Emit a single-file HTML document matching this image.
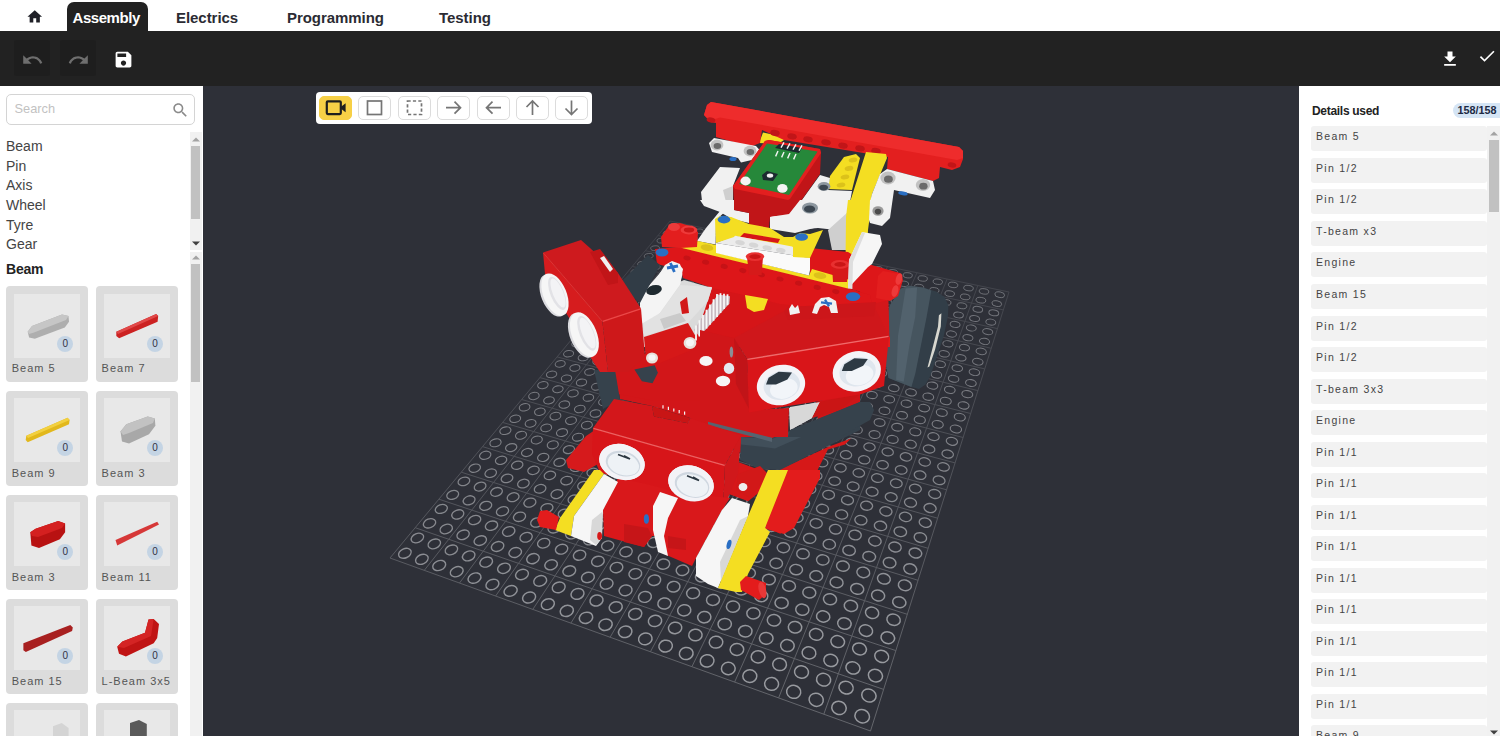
<!DOCTYPE html>
<html lang="en"><head><meta charset="utf-8"><title>Assembly</title>
<style>
*{box-sizing:border-box;margin:0;padding:0}
html,body{width:1500px;height:736px;overflow:hidden;background:#2e3038;font-family:"Liberation Sans",sans-serif;color:#333}
#nav{position:absolute;left:0;top:0;width:1500px;height:31px;background:#fff}
#nav .tab{position:absolute;top:2px;height:29px;font-weight:bold;font-size:15px;line-height:32.400px;color:#2b2b33;white-space:nowrap;letter-spacing:-0.05px}
#nav .tab.act{left:67px;width:81px;background:#222;color:#fff;border-radius:7px 7px 0 0;text-align:left;padding-left:5.500px;letter-spacing:-0.450px}
#bar{position:absolute;left:0;top:31px;width:1500px;height:55px;background:#222}
.tb{position:absolute;top:9px;width:36px;height:36px;background:#1e1e1e;border-radius:3px}
#left{position:absolute;left:0;top:86px;width:203px;height:650px;background:#fff;overflow:hidden}
#search{position:absolute;left:5.5px;top:8px;width:189px;height:30.5px;border:1px solid #d4d4d4;border-radius:5px;background:#fff;font-size:12.8px;color:#c2c2c2;line-height:27px;padding-left:8px}
.cat{position:absolute;left:6px;font-size:14px;color:#444;line-height:16px;white-space:nowrap}
.sbt{position:absolute;background:#f1f1f1}
.sbh{position:absolute;background:#c1c1c1}
.card{position:absolute;width:82px;height:95.600px;background:#dcdcdc;border-radius:4px}
.card i{position:absolute;left:8px;top:7.5px;width:66px;height:64px;background:#e8e8e8;display:block}
.card b{position:absolute;left:51.5px;top:49.5px;width:16px;height:16px;border-radius:8px;background:#c4d4e4;font-weight:normal;font-size:10px;line-height:16px;text-align:center;color:#334}
.card span{position:absolute;left:6px;top:75px;font-size:11px;letter-spacing:1px;color:#555;white-space:nowrap;line-height:14px}
.card svg{position:absolute;left:8px;top:7.5px}
#right{position:absolute;left:1299px;top:86px;width:201px;height:650px;background:#fff;overflow:hidden}
.it{position:absolute;left:12px;width:175.5px;height:25px;background:#f2f2f2;border-radius:3px;font-size:10.5px;letter-spacing:1.3px;color:#444;line-height:20px;padding-left:5px;white-space:nowrap}
#scene{position:absolute;left:202px;top:86px}
#vt{position:absolute;left:315.5px;top:92px;width:276.5px;height:32px;background:#fff;border-radius:4px}
.vb{position:absolute;top:3.5px;width:33px;height:24.5px;border:1px solid #dcdcdc;border-radius:5px;background:#fff}
.vb.on{background:#f7d046;border-color:#f7d046}
</style></head><body>
<svg id="scene" width="1097" height="650" viewBox="0 0 1097 650">
<rect width="1097" height="650" fill="#2e3038"/>
<defs><linearGradient id="gl" gradientUnits="userSpaceOnUse" x1="0" y1="134" x2="0" y2="614"><stop offset="0" stop-color="#3d3f47"/><stop offset="1" stop-color="#63656b"/></linearGradient></defs>
<path d="M188.0 472.0L468.0 135.0M222.3 484.3L493.5 140.3M257.5 497.0L519.5 145.8M293.6 510.0L545.9 151.3M330.8 523.4L572.8 157.0M368.9 537.1L600.3 162.7M408.1 551.3L628.2 168.5M448.4 565.8L656.6 174.5M489.9 580.7L685.5 180.6M532.6 596.1L715.0 186.7M576.6 611.9L745.1 193.0M621.8 628.2L775.8 199.5M668.5 645.0L807.0 206.0M188.0 472.0L668.5 645.0M213.2 441.7L681.6 603.4M236.9 413.2L693.9 564.6M259.3 386.2L705.3 528.3M280.5 360.6L716.1 494.3M300.6 336.4L726.1 462.3M319.7 313.5L735.6 432.2M337.9 291.6L744.6 403.8M355.1 270.9L753.1 376.9M371.6 251.1L761.1 351.5M387.3 232.2L768.7 327.5M402.2 214.2L775.9 304.6M416.5 196.9L782.7 282.9M430.2 180.4L789.2 262.3M443.4 164.7L795.4 242.6M455.9 149.5L801.4 223.9M468.0 135.0L807.0 206.0" stroke="url(#gl)" stroke-width="1" fill="none"/>
<g fill="none" stroke="#989a9f"><ellipse cx="202.9" cy="467.3" rx="6.6" ry="4.6" transform="rotate(156 202.9 467.3)" stroke-width="1.38" opacity="0.88"/><ellipse cx="215.4" cy="452.0" rx="6.5" ry="4.5" transform="rotate(158 215.4 452.0)" stroke-width="1.35" opacity="0.86"/><ellipse cx="227.5" cy="437.3" rx="6.4" ry="4.4" transform="rotate(159 227.5 437.3)" stroke-width="1.32" opacity="0.84"/><ellipse cx="239.3" cy="422.9" rx="6.2" ry="4.3" transform="rotate(160 239.3 422.9)" stroke-width="1.29" opacity="0.83"/><ellipse cx="250.7" cy="408.9" rx="6.1" ry="4.2" transform="rotate(161 250.7 408.9)" stroke-width="1.26" opacity="0.81"/><ellipse cx="261.9" cy="395.4" rx="6.0" ry="4.1" transform="rotate(162 261.9 395.4)" stroke-width="1.24" opacity="0.80"/><ellipse cx="272.7" cy="382.2" rx="5.9" ry="4.0" transform="rotate(163 272.7 382.2)" stroke-width="1.21" opacity="0.79"/><ellipse cx="283.2" cy="369.3" rx="5.8" ry="3.9" transform="rotate(164 283.2 369.3)" stroke-width="1.19" opacity="0.77"/><ellipse cx="293.5" cy="356.8" rx="5.7" ry="3.8" transform="rotate(165 293.5 356.8)" stroke-width="1.16" opacity="0.76"/><ellipse cx="303.4" cy="344.7" rx="5.6" ry="3.7" transform="rotate(166 303.4 344.7)" stroke-width="1.14" opacity="0.75"/><ellipse cx="313.2" cy="332.8" rx="5.5" ry="3.6" transform="rotate(167 313.2 332.8)" stroke-width="1.12" opacity="0.74"/><ellipse cx="322.6" cy="321.3" rx="5.4" ry="3.6" transform="rotate(167 322.6 321.3)" stroke-width="1.10" opacity="0.73"/><ellipse cx="331.9" cy="310.0" rx="5.3" ry="3.5" transform="rotate(168 331.9 310.0)" stroke-width="1.08" opacity="0.71"/><ellipse cx="340.9" cy="299.1" rx="5.3" ry="3.4" transform="rotate(169 340.9 299.1)" stroke-width="1.06" opacity="0.70"/><ellipse cx="349.6" cy="288.4" rx="5.2" ry="3.3" transform="rotate(170 349.6 288.4)" stroke-width="1.04" opacity="0.69"/><ellipse cx="358.2" cy="277.9" rx="5.1" ry="3.2" transform="rotate(170 358.2 277.9)" stroke-width="1.02" opacity="0.68"/><ellipse cx="366.6" cy="267.7" rx="5.1" ry="3.2" transform="rotate(171 366.6 267.7)" stroke-width="1.00" opacity="0.67"/><ellipse cx="374.7" cy="257.8" rx="5.0" ry="3.1" transform="rotate(171 374.7 257.8)" stroke-width="0.98" opacity="0.66"/><ellipse cx="382.7" cy="248.1" rx="4.9" ry="3.0" transform="rotate(172 382.7 248.1)" stroke-width="0.97" opacity="0.65"/><ellipse cx="390.5" cy="238.6" rx="4.9" ry="3.0" transform="rotate(172 390.5 238.6)" stroke-width="0.95" opacity="0.65"/><ellipse cx="398.0" cy="229.3" rx="4.8" ry="2.9" transform="rotate(173 398.0 229.3)" stroke-width="0.93" opacity="0.64"/><ellipse cx="405.5" cy="220.3" rx="4.7" ry="2.8" transform="rotate(173 405.5 220.3)" stroke-width="0.92" opacity="0.63"/><ellipse cx="412.7" cy="211.4" rx="4.7" ry="2.8" transform="rotate(174 412.7 211.4)" stroke-width="0.90" opacity="0.62"/><ellipse cx="419.8" cy="202.8" rx="4.6" ry="2.7" transform="rotate(174 419.8 202.8)" stroke-width="0.89" opacity="0.61"/><ellipse cx="426.8" cy="194.3" rx="4.6" ry="2.7" transform="rotate(174 426.8 194.3)" stroke-width="0.87" opacity="0.60"/><ellipse cx="433.6" cy="186.0" rx="4.5" ry="2.6" transform="rotate(175 433.6 186.0)" stroke-width="0.86" opacity="0.60"/><ellipse cx="440.2" cy="177.9" rx="4.5" ry="2.5" transform="rotate(175 440.2 177.9)" stroke-width="0.84" opacity="0.59"/><ellipse cx="446.7" cy="170.0" rx="4.4" ry="2.5" transform="rotate(175 446.7 170.0)" stroke-width="0.83" opacity="0.58"/><ellipse cx="453.1" cy="162.2" rx="4.4" ry="2.4" transform="rotate(176 453.1 162.2)" stroke-width="0.82" opacity="0.58"/><ellipse cx="459.3" cy="154.6" rx="4.3" ry="2.4" transform="rotate(176 459.3 154.6)" stroke-width="0.80" opacity="0.57"/><ellipse cx="465.4" cy="147.2" rx="4.3" ry="2.3" transform="rotate(176 465.4 147.2)" stroke-width="0.79" opacity="0.56"/><ellipse cx="471.4" cy="139.9" rx="4.2" ry="2.3" transform="rotate(177 471.4 139.9)" stroke-width="0.78" opacity="0.56"/><ellipse cx="219.9" cy="473.3" rx="6.6" ry="4.7" transform="rotate(156 219.9 473.3)" stroke-width="1.39" opacity="0.88"/><ellipse cx="232.3" cy="457.9" rx="6.5" ry="4.6" transform="rotate(158 232.3 457.9)" stroke-width="1.36" opacity="0.87"/><ellipse cx="244.2" cy="443.0" rx="6.4" ry="4.5" transform="rotate(159 244.2 443.0)" stroke-width="1.33" opacity="0.85"/><ellipse cx="255.8" cy="428.4" rx="6.2" ry="4.4" transform="rotate(160 255.8 428.4)" stroke-width="1.30" opacity="0.84"/><ellipse cx="267.1" cy="414.3" rx="6.1" ry="4.3" transform="rotate(161 267.1 414.3)" stroke-width="1.28" opacity="0.82"/><ellipse cx="278.1" cy="400.6" rx="6.0" ry="4.2" transform="rotate(162 278.1 400.6)" stroke-width="1.25" opacity="0.81"/><ellipse cx="288.7" cy="387.2" rx="5.9" ry="4.1" transform="rotate(163 288.7 387.2)" stroke-width="1.22" opacity="0.79"/><ellipse cx="299.1" cy="374.3" rx="5.8" ry="4.0" transform="rotate(164 299.1 374.3)" stroke-width="1.20" opacity="0.78"/><ellipse cx="309.2" cy="361.6" rx="5.7" ry="3.9" transform="rotate(165 309.2 361.6)" stroke-width="1.17" opacity="0.77"/><ellipse cx="319.0" cy="349.3" rx="5.6" ry="3.8" transform="rotate(166 319.0 349.3)" stroke-width="1.15" opacity="0.75"/><ellipse cx="328.6" cy="337.4" rx="5.5" ry="3.7" transform="rotate(167 328.6 337.4)" stroke-width="1.13" opacity="0.74"/><ellipse cx="337.9" cy="325.7" rx="5.4" ry="3.6" transform="rotate(168 337.9 325.7)" stroke-width="1.11" opacity="0.73"/><ellipse cx="347.0" cy="314.3" rx="5.4" ry="3.5" transform="rotate(169 347.0 314.3)" stroke-width="1.09" opacity="0.72"/><ellipse cx="355.9" cy="303.2" rx="5.3" ry="3.4" transform="rotate(169 355.9 303.2)" stroke-width="1.07" opacity="0.71"/><ellipse cx="364.5" cy="292.4" rx="5.2" ry="3.4" transform="rotate(170 364.5 292.4)" stroke-width="1.05" opacity="0.70"/><ellipse cx="372.9" cy="281.9" rx="5.1" ry="3.3" transform="rotate(171 372.9 281.9)" stroke-width="1.03" opacity="0.69"/><ellipse cx="381.2" cy="271.6" rx="5.1" ry="3.2" transform="rotate(171 381.2 271.6)" stroke-width="1.01" opacity="0.68"/><ellipse cx="389.2" cy="261.6" rx="5.0" ry="3.1" transform="rotate(172 389.2 261.6)" stroke-width="0.99" opacity="0.67"/><ellipse cx="397.0" cy="251.7" rx="4.9" ry="3.1" transform="rotate(172 397.0 251.7)" stroke-width="0.97" opacity="0.66"/><ellipse cx="404.7" cy="242.2" rx="4.9" ry="3.0" transform="rotate(173 404.7 242.2)" stroke-width="0.96" opacity="0.65"/><ellipse cx="412.1" cy="232.8" rx="4.8" ry="2.9" transform="rotate(173 412.1 232.8)" stroke-width="0.94" opacity="0.64"/><ellipse cx="419.4" cy="223.7" rx="4.7" ry="2.9" transform="rotate(174 419.4 223.7)" stroke-width="0.92" opacity="0.63"/><ellipse cx="426.6" cy="214.8" rx="4.7" ry="2.8" transform="rotate(174 426.6 214.8)" stroke-width="0.91" opacity="0.62"/><ellipse cx="433.5" cy="206.0" rx="4.6" ry="2.7" transform="rotate(175 433.5 206.0)" stroke-width="0.89" opacity="0.62"/><ellipse cx="440.4" cy="197.5" rx="4.6" ry="2.7" transform="rotate(175 440.4 197.5)" stroke-width="0.88" opacity="0.61"/><ellipse cx="447.0" cy="189.1" rx="4.5" ry="2.6" transform="rotate(175 447.0 189.1)" stroke-width="0.86" opacity="0.60"/><ellipse cx="453.6" cy="181.0" rx="4.5" ry="2.6" transform="rotate(176 453.6 181.0)" stroke-width="0.85" opacity="0.59"/><ellipse cx="460.0" cy="173.0" rx="4.4" ry="2.5" transform="rotate(176 460.0 173.0)" stroke-width="0.84" opacity="0.59"/><ellipse cx="466.2" cy="165.1" rx="4.4" ry="2.5" transform="rotate(176 466.2 165.1)" stroke-width="0.82" opacity="0.58"/><ellipse cx="472.3" cy="157.5" rx="4.3" ry="2.4" transform="rotate(176 472.3 157.5)" stroke-width="0.81" opacity="0.57"/><ellipse cx="478.3" cy="150.0" rx="4.3" ry="2.4" transform="rotate(177 478.3 150.0)" stroke-width="0.80" opacity="0.56"/><ellipse cx="484.2" cy="142.6" rx="4.2" ry="2.3" transform="rotate(177 484.2 142.6)" stroke-width="0.78" opacity="0.56"/><ellipse cx="237.2" cy="479.5" rx="6.7" ry="4.8" transform="rotate(157 237.2 479.5)" stroke-width="1.41" opacity="0.89"/><ellipse cx="249.4" cy="463.9" rx="6.5" ry="4.6" transform="rotate(158 249.4 463.9)" stroke-width="1.38" opacity="0.87"/><ellipse cx="261.1" cy="448.8" rx="6.4" ry="4.5" transform="rotate(159 261.1 448.8)" stroke-width="1.35" opacity="0.86"/><ellipse cx="272.6" cy="434.0" rx="6.3" ry="4.4" transform="rotate(161 272.6 434.0)" stroke-width="1.32" opacity="0.84"/><ellipse cx="283.7" cy="419.8" rx="6.1" ry="4.3" transform="rotate(162 283.7 419.8)" stroke-width="1.29" opacity="0.83"/><ellipse cx="294.5" cy="405.9" rx="6.0" ry="4.2" transform="rotate(163 294.5 405.9)" stroke-width="1.26" opacity="0.81"/><ellipse cx="305.0" cy="392.4" rx="5.9" ry="4.1" transform="rotate(164 305.0 392.4)" stroke-width="1.23" opacity="0.80"/><ellipse cx="315.2" cy="379.2" rx="5.8" ry="4.0" transform="rotate(165 315.2 379.2)" stroke-width="1.21" opacity="0.79"/><ellipse cx="325.1" cy="366.5" rx="5.7" ry="3.9" transform="rotate(166 325.1 366.5)" stroke-width="1.19" opacity="0.77"/><ellipse cx="334.8" cy="354.0" rx="5.6" ry="3.8" transform="rotate(167 334.8 354.0)" stroke-width="1.16" opacity="0.76"/><ellipse cx="344.2" cy="341.9" rx="5.5" ry="3.7" transform="rotate(168 344.2 341.9)" stroke-width="1.14" opacity="0.75"/><ellipse cx="353.4" cy="330.1" rx="5.5" ry="3.7" transform="rotate(169 353.4 330.1)" stroke-width="1.12" opacity="0.74"/><ellipse cx="362.3" cy="318.6" rx="5.4" ry="3.6" transform="rotate(169 362.3 318.6)" stroke-width="1.10" opacity="0.72"/><ellipse cx="371.0" cy="307.4" rx="5.3" ry="3.5" transform="rotate(170 371.0 307.4)" stroke-width="1.07" opacity="0.71"/><ellipse cx="379.5" cy="296.5" rx="5.2" ry="3.4" transform="rotate(171 379.5 296.5)" stroke-width="1.05" opacity="0.70"/><ellipse cx="387.8" cy="285.9" rx="5.2" ry="3.3" transform="rotate(171 387.8 285.9)" stroke-width="1.03" opacity="0.69"/><ellipse cx="395.9" cy="275.5" rx="5.1" ry="3.2" transform="rotate(172 395.9 275.5)" stroke-width="1.02" opacity="0.68"/><ellipse cx="403.8" cy="265.4" rx="5.0" ry="3.2" transform="rotate(172 403.8 265.4)" stroke-width="1.00" opacity="0.67"/><ellipse cx="411.5" cy="255.5" rx="4.9" ry="3.1" transform="rotate(173 411.5 255.5)" stroke-width="0.98" opacity="0.66"/><ellipse cx="419.0" cy="245.8" rx="4.9" ry="3.0" transform="rotate(173 419.0 245.8)" stroke-width="0.96" opacity="0.65"/><ellipse cx="426.3" cy="236.3" rx="4.8" ry="3.0" transform="rotate(174 426.3 236.3)" stroke-width="0.95" opacity="0.64"/><ellipse cx="433.5" cy="227.1" rx="4.8" ry="2.9" transform="rotate(174 433.5 227.1)" stroke-width="0.93" opacity="0.64"/><ellipse cx="440.5" cy="218.1" rx="4.7" ry="2.8" transform="rotate(175 440.5 218.1)" stroke-width="0.91" opacity="0.63"/><ellipse cx="447.4" cy="209.3" rx="4.7" ry="2.8" transform="rotate(175 447.4 209.3)" stroke-width="0.90" opacity="0.62"/><ellipse cx="454.1" cy="200.7" rx="4.6" ry="2.7" transform="rotate(175 454.1 200.7)" stroke-width="0.88" opacity="0.61"/><ellipse cx="460.6" cy="192.3" rx="4.5" ry="2.7" transform="rotate(176 460.6 192.3)" stroke-width="0.87" opacity="0.60"/><ellipse cx="467.1" cy="184.0" rx="4.5" ry="2.6" transform="rotate(176 467.1 184.0)" stroke-width="0.85" opacity="0.60"/><ellipse cx="473.3" cy="175.9" rx="4.4" ry="2.5" transform="rotate(176 473.3 175.9)" stroke-width="0.84" opacity="0.59"/><ellipse cx="479.5" cy="168.1" rx="4.4" ry="2.5" transform="rotate(177 479.5 168.1)" stroke-width="0.83" opacity="0.58"/><ellipse cx="485.5" cy="160.3" rx="4.3" ry="2.4" transform="rotate(177 485.5 160.3)" stroke-width="0.81" opacity="0.57"/><ellipse cx="491.4" cy="152.8" rx="4.3" ry="2.4" transform="rotate(177 491.4 152.8)" stroke-width="0.80" opacity="0.57"/><ellipse cx="497.1" cy="145.3" rx="4.3" ry="2.3" transform="rotate(177 497.1 145.3)" stroke-width="0.79" opacity="0.56"/><ellipse cx="254.7" cy="485.7" rx="6.7" ry="4.8" transform="rotate(157 254.7 485.7)" stroke-width="1.42" opacity="0.90"/><ellipse cx="266.7" cy="469.9" rx="6.5" ry="4.7" transform="rotate(158 266.7 469.9)" stroke-width="1.39" opacity="0.88"/><ellipse cx="278.3" cy="454.6" rx="6.4" ry="4.6" transform="rotate(160 278.3 454.6)" stroke-width="1.36" opacity="0.86"/><ellipse cx="289.5" cy="439.7" rx="6.3" ry="4.5" transform="rotate(161 289.5 439.7)" stroke-width="1.33" opacity="0.85"/><ellipse cx="300.5" cy="425.3" rx="6.2" ry="4.4" transform="rotate(162 300.5 425.3)" stroke-width="1.30" opacity="0.83"/><ellipse cx="311.1" cy="411.2" rx="6.0" ry="4.3" transform="rotate(163 311.1 411.2)" stroke-width="1.27" opacity="0.82"/><ellipse cx="321.4" cy="397.6" rx="5.9" ry="4.2" transform="rotate(164 321.4 397.6)" stroke-width="1.25" opacity="0.80"/><ellipse cx="331.5" cy="384.3" rx="5.8" ry="4.1" transform="rotate(166 331.5 384.3)" stroke-width="1.22" opacity="0.79"/><ellipse cx="341.2" cy="371.4" rx="5.7" ry="4.0" transform="rotate(167 341.2 371.4)" stroke-width="1.20" opacity="0.78"/><ellipse cx="350.8" cy="358.8" rx="5.6" ry="3.9" transform="rotate(167 350.8 358.8)" stroke-width="1.17" opacity="0.76"/><ellipse cx="360.0" cy="346.6" rx="5.6" ry="3.8" transform="rotate(168 360.0 346.6)" stroke-width="1.15" opacity="0.75"/><ellipse cx="369.0" cy="334.6" rx="5.5" ry="3.7" transform="rotate(169 369.0 334.6)" stroke-width="1.13" opacity="0.74"/><ellipse cx="377.8" cy="323.0" rx="5.4" ry="3.6" transform="rotate(170 377.8 323.0)" stroke-width="1.10" opacity="0.73"/><ellipse cx="386.4" cy="311.7" rx="5.3" ry="3.5" transform="rotate(171 386.4 311.7)" stroke-width="1.08" opacity="0.72"/><ellipse cx="394.7" cy="300.7" rx="5.2" ry="3.4" transform="rotate(171 394.7 300.7)" stroke-width="1.06" opacity="0.71"/><ellipse cx="402.9" cy="289.9" rx="5.2" ry="3.4" transform="rotate(172 402.9 289.9)" stroke-width="1.04" opacity="0.70"/><ellipse cx="410.8" cy="279.4" rx="5.1" ry="3.3" transform="rotate(172 410.8 279.4)" stroke-width="1.02" opacity="0.69"/><ellipse cx="418.6" cy="269.2" rx="5.0" ry="3.2" transform="rotate(173 418.6 269.2)" stroke-width="1.01" opacity="0.68"/><ellipse cx="426.1" cy="259.2" rx="5.0" ry="3.1" transform="rotate(174 426.1 259.2)" stroke-width="0.99" opacity="0.67"/><ellipse cx="433.5" cy="249.4" rx="4.9" ry="3.1" transform="rotate(174 433.5 249.4)" stroke-width="0.97" opacity="0.66"/><ellipse cx="440.7" cy="239.9" rx="4.8" ry="3.0" transform="rotate(174 440.7 239.9)" stroke-width="0.95" opacity="0.65"/><ellipse cx="447.8" cy="230.6" rx="4.8" ry="2.9" transform="rotate(175 447.8 230.6)" stroke-width="0.94" opacity="0.64"/><ellipse cx="454.6" cy="221.5" rx="4.7" ry="2.9" transform="rotate(175 454.6 221.5)" stroke-width="0.92" opacity="0.63"/><ellipse cx="461.4" cy="212.6" rx="4.7" ry="2.8" transform="rotate(176 461.4 212.6)" stroke-width="0.91" opacity="0.62"/><ellipse cx="467.9" cy="203.9" rx="4.6" ry="2.7" transform="rotate(176 467.9 203.9)" stroke-width="0.89" opacity="0.61"/><ellipse cx="474.4" cy="195.4" rx="4.6" ry="2.7" transform="rotate(176 474.4 195.4)" stroke-width="0.88" opacity="0.61"/><ellipse cx="480.7" cy="187.1" rx="4.5" ry="2.6" transform="rotate(177 480.7 187.1)" stroke-width="0.86" opacity="0.60"/><ellipse cx="486.8" cy="179.0" rx="4.5" ry="2.6" transform="rotate(177 486.8 179.0)" stroke-width="0.85" opacity="0.59"/><ellipse cx="492.9" cy="171.0" rx="4.4" ry="2.5" transform="rotate(177 492.9 171.0)" stroke-width="0.83" opacity="0.58"/><ellipse cx="498.7" cy="163.2" rx="4.4" ry="2.5" transform="rotate(177 498.7 163.2)" stroke-width="0.82" opacity="0.58"/><ellipse cx="504.5" cy="155.6" rx="4.3" ry="2.4" transform="rotate(178 504.5 155.6)" stroke-width="0.81" opacity="0.57"/><ellipse cx="510.2" cy="148.1" rx="4.3" ry="2.4" transform="rotate(178 510.2 148.1)" stroke-width="0.79" opacity="0.56"/><ellipse cx="272.5" cy="492.1" rx="6.7" ry="4.9" transform="rotate(157 272.5 492.1)" stroke-width="1.43" opacity="0.91"/><ellipse cx="284.2" cy="476.1" rx="6.5" ry="4.8" transform="rotate(159 284.2 476.1)" stroke-width="1.40" opacity="0.89"/><ellipse cx="295.6" cy="460.5" rx="6.4" ry="4.7" transform="rotate(160 295.6 460.5)" stroke-width="1.37" opacity="0.87"/><ellipse cx="306.7" cy="445.5" rx="6.3" ry="4.6" transform="rotate(161 306.7 445.5)" stroke-width="1.34" opacity="0.86"/><ellipse cx="317.5" cy="430.8" rx="6.2" ry="4.5" transform="rotate(163 317.5 430.8)" stroke-width="1.31" opacity="0.84"/><ellipse cx="327.9" cy="416.6" rx="6.1" ry="4.4" transform="rotate(164 327.9 416.6)" stroke-width="1.28" opacity="0.82"/><ellipse cx="338.1" cy="402.8" rx="5.9" ry="4.2" transform="rotate(165 338.1 402.8)" stroke-width="1.26" opacity="0.81"/><ellipse cx="347.9" cy="389.4" rx="5.8" ry="4.1" transform="rotate(166 347.9 389.4)" stroke-width="1.23" opacity="0.80"/><ellipse cx="357.6" cy="376.3" rx="5.8" ry="4.0" transform="rotate(167 357.6 376.3)" stroke-width="1.21" opacity="0.78"/><ellipse cx="366.9" cy="363.6" rx="5.7" ry="3.9" transform="rotate(168 366.9 363.6)" stroke-width="1.18" opacity="0.77"/><ellipse cx="376.0" cy="351.2" rx="5.6" ry="3.8" transform="rotate(169 376.0 351.2)" stroke-width="1.16" opacity="0.76"/><ellipse cx="384.9" cy="339.2" rx="5.5" ry="3.8" transform="rotate(170 384.9 339.2)" stroke-width="1.14" opacity="0.75"/><ellipse cx="393.5" cy="327.5" rx="5.4" ry="3.7" transform="rotate(171 393.5 327.5)" stroke-width="1.11" opacity="0.73"/><ellipse cx="401.9" cy="316.0" rx="5.3" ry="3.6" transform="rotate(171 401.9 316.0)" stroke-width="1.09" opacity="0.72"/><ellipse cx="410.1" cy="304.9" rx="5.3" ry="3.5" transform="rotate(172 410.1 304.9)" stroke-width="1.07" opacity="0.71"/><ellipse cx="418.1" cy="294.0" rx="5.2" ry="3.4" transform="rotate(173 418.1 294.0)" stroke-width="1.05" opacity="0.70"/><ellipse cx="425.9" cy="283.4" rx="5.1" ry="3.3" transform="rotate(173 425.9 283.4)" stroke-width="1.03" opacity="0.69"/><ellipse cx="433.5" cy="273.1" rx="5.1" ry="3.3" transform="rotate(174 433.5 273.1)" stroke-width="1.01" opacity="0.68"/><ellipse cx="440.9" cy="263.0" rx="5.0" ry="3.2" transform="rotate(174 440.9 263.0)" stroke-width="1.00" opacity="0.67"/><ellipse cx="448.1" cy="253.1" rx="4.9" ry="3.1" transform="rotate(175 448.1 253.1)" stroke-width="0.98" opacity="0.66"/><ellipse cx="455.2" cy="243.5" rx="4.9" ry="3.0" transform="rotate(175 455.2 243.5)" stroke-width="0.96" opacity="0.65"/><ellipse cx="462.1" cy="234.1" rx="4.8" ry="3.0" transform="rotate(175 462.1 234.1)" stroke-width="0.94" opacity="0.64"/><ellipse cx="468.9" cy="224.9" rx="4.7" ry="2.9" transform="rotate(176 468.9 224.9)" stroke-width="0.93" opacity="0.63"/><ellipse cx="475.5" cy="215.9" rx="4.7" ry="2.8" transform="rotate(176 475.5 215.9)" stroke-width="0.91" opacity="0.63"/><ellipse cx="481.9" cy="207.2" rx="4.6" ry="2.8" transform="rotate(177 481.9 207.2)" stroke-width="0.90" opacity="0.62"/><ellipse cx="488.2" cy="198.6" rx="4.6" ry="2.7" transform="rotate(177 488.2 198.6)" stroke-width="0.88" opacity="0.61"/><ellipse cx="494.4" cy="190.2" rx="4.5" ry="2.7" transform="rotate(177 494.4 190.2)" stroke-width="0.87" opacity="0.60"/><ellipse cx="500.4" cy="182.0" rx="4.5" ry="2.6" transform="rotate(177 500.4 182.0)" stroke-width="0.85" opacity="0.59"/><ellipse cx="506.4" cy="174.0" rx="4.4" ry="2.5" transform="rotate(178 506.4 174.0)" stroke-width="0.84" opacity="0.59"/><ellipse cx="512.1" cy="166.1" rx="4.4" ry="2.5" transform="rotate(178 512.1 166.1)" stroke-width="0.83" opacity="0.58"/><ellipse cx="517.8" cy="158.4" rx="4.3" ry="2.4" transform="rotate(178 517.8 158.4)" stroke-width="0.81" opacity="0.57"/><ellipse cx="523.3" cy="150.9" rx="4.3" ry="2.4" transform="rotate(178 523.3 150.9)" stroke-width="0.80" opacity="0.57"/><ellipse cx="290.4" cy="498.5" rx="6.7" ry="5.0" transform="rotate(157 290.4 498.5)" stroke-width="1.45" opacity="0.91"/><ellipse cx="302.0" cy="482.3" rx="6.5" ry="4.9" transform="rotate(159 302.0 482.3)" stroke-width="1.42" opacity="0.90"/><ellipse cx="313.2" cy="466.5" rx="6.4" ry="4.8" transform="rotate(161 313.2 466.5)" stroke-width="1.38" opacity="0.88"/><ellipse cx="324.1" cy="451.3" rx="6.3" ry="4.7" transform="rotate(162 324.1 451.3)" stroke-width="1.35" opacity="0.86"/><ellipse cx="334.7" cy="436.5" rx="6.2" ry="4.5" transform="rotate(163 334.7 436.5)" stroke-width="1.32" opacity="0.85"/><ellipse cx="344.9" cy="422.1" rx="6.1" ry="4.4" transform="rotate(165 344.9 422.1)" stroke-width="1.30" opacity="0.83"/><ellipse cx="354.9" cy="408.1" rx="6.0" ry="4.3" transform="rotate(166 354.9 408.1)" stroke-width="1.27" opacity="0.82"/><ellipse cx="364.6" cy="394.6" rx="5.9" ry="4.2" transform="rotate(167 364.6 394.6)" stroke-width="1.24" opacity="0.80"/><ellipse cx="374.0" cy="381.3" rx="5.8" ry="4.1" transform="rotate(168 374.0 381.3)" stroke-width="1.22" opacity="0.79"/><ellipse cx="383.2" cy="368.5" rx="5.7" ry="4.0" transform="rotate(169 383.2 368.5)" stroke-width="1.19" opacity="0.78"/><ellipse cx="392.2" cy="356.0" rx="5.6" ry="3.9" transform="rotate(170 392.2 356.0)" stroke-width="1.17" opacity="0.76"/><ellipse cx="400.9" cy="343.8" rx="5.5" ry="3.8" transform="rotate(171 400.9 343.8)" stroke-width="1.15" opacity="0.75"/><ellipse cx="409.3" cy="331.9" rx="5.4" ry="3.7" transform="rotate(171 409.3 331.9)" stroke-width="1.12" opacity="0.74"/><ellipse cx="417.6" cy="320.4" rx="5.4" ry="3.6" transform="rotate(172 417.6 320.4)" stroke-width="1.10" opacity="0.73"/><ellipse cx="425.6" cy="309.1" rx="5.3" ry="3.5" transform="rotate(173 425.6 309.1)" stroke-width="1.08" opacity="0.72"/><ellipse cx="433.5" cy="298.1" rx="5.2" ry="3.5" transform="rotate(173 433.5 298.1)" stroke-width="1.06" opacity="0.71"/><ellipse cx="441.1" cy="287.4" rx="5.1" ry="3.4" transform="rotate(174 441.1 287.4)" stroke-width="1.04" opacity="0.69"/><ellipse cx="448.6" cy="277.0" rx="5.1" ry="3.3" transform="rotate(174 448.6 277.0)" stroke-width="1.02" opacity="0.68"/><ellipse cx="455.8" cy="266.8" rx="5.0" ry="3.2" transform="rotate(175 455.8 266.8)" stroke-width="1.00" opacity="0.67"/><ellipse cx="462.9" cy="256.8" rx="4.9" ry="3.1" transform="rotate(175 462.9 256.8)" stroke-width="0.98" opacity="0.67"/><ellipse cx="469.9" cy="247.1" rx="4.9" ry="3.1" transform="rotate(176 469.9 247.1)" stroke-width="0.97" opacity="0.66"/><ellipse cx="476.6" cy="237.6" rx="4.8" ry="3.0" transform="rotate(176 476.6 237.6)" stroke-width="0.95" opacity="0.65"/><ellipse cx="483.3" cy="228.4" rx="4.8" ry="2.9" transform="rotate(176 483.3 228.4)" stroke-width="0.93" opacity="0.64"/><ellipse cx="489.7" cy="219.3" rx="4.7" ry="2.9" transform="rotate(177 489.7 219.3)" stroke-width="0.92" opacity="0.63"/><ellipse cx="496.1" cy="210.5" rx="4.7" ry="2.8" transform="rotate(177 496.1 210.5)" stroke-width="0.90" opacity="0.62"/><ellipse cx="502.2" cy="201.8" rx="4.6" ry="2.7" transform="rotate(177 502.2 201.8)" stroke-width="0.89" opacity="0.61"/><ellipse cx="508.3" cy="193.3" rx="4.6" ry="2.7" transform="rotate(178 508.3 193.3)" stroke-width="0.87" opacity="0.61"/><ellipse cx="514.2" cy="185.1" rx="4.5" ry="2.6" transform="rotate(178 514.2 185.1)" stroke-width="0.86" opacity="0.60"/><ellipse cx="520.0" cy="177.0" rx="4.5" ry="2.6" transform="rotate(178 520.0 177.0)" stroke-width="0.85" opacity="0.59"/><ellipse cx="525.6" cy="169.0" rx="4.4" ry="2.5" transform="rotate(178 525.6 169.0)" stroke-width="0.83" opacity="0.58"/><ellipse cx="531.2" cy="161.3" rx="4.4" ry="2.5" transform="rotate(179 531.2 161.3)" stroke-width="0.82" opacity="0.58"/><ellipse cx="536.6" cy="153.7" rx="4.3" ry="2.4" transform="rotate(179 536.6 153.7)" stroke-width="0.81" opacity="0.57"/><ellipse cx="308.6" cy="504.9" rx="6.7" ry="5.1" transform="rotate(158 308.6 504.9)" stroke-width="1.46" opacity="0.92"/><ellipse cx="320.0" cy="488.5" rx="6.6" ry="5.0" transform="rotate(160 320.0 488.5)" stroke-width="1.43" opacity="0.90"/><ellipse cx="331.0" cy="472.6" rx="6.4" ry="4.9" transform="rotate(161 331.0 472.6)" stroke-width="1.40" opacity="0.89"/><ellipse cx="341.7" cy="457.2" rx="6.3" ry="4.7" transform="rotate(163 341.7 457.2)" stroke-width="1.37" opacity="0.87"/><ellipse cx="352.1" cy="442.2" rx="6.2" ry="4.6" transform="rotate(164 352.1 442.2)" stroke-width="1.34" opacity="0.85"/><ellipse cx="362.2" cy="427.7" rx="6.1" ry="4.5" transform="rotate(165 362.2 427.7)" stroke-width="1.31" opacity="0.84"/><ellipse cx="372.0" cy="413.5" rx="6.0" ry="4.4" transform="rotate(167 372.0 413.5)" stroke-width="1.28" opacity="0.82"/><ellipse cx="381.5" cy="399.8" rx="5.9" ry="4.3" transform="rotate(168 381.5 399.8)" stroke-width="1.25" opacity="0.81"/><ellipse cx="390.7" cy="386.4" rx="5.8" ry="4.2" transform="rotate(169 390.7 386.4)" stroke-width="1.23" opacity="0.79"/><ellipse cx="399.7" cy="373.4" rx="5.7" ry="4.1" transform="rotate(170 399.7 373.4)" stroke-width="1.20" opacity="0.78"/><ellipse cx="408.5" cy="360.8" rx="5.6" ry="4.0" transform="rotate(171 408.5 360.8)" stroke-width="1.18" opacity="0.77"/><ellipse cx="417.0" cy="348.5" rx="5.5" ry="3.9" transform="rotate(171 417.0 348.5)" stroke-width="1.15" opacity="0.76"/><ellipse cx="425.3" cy="336.5" rx="5.4" ry="3.8" transform="rotate(172 425.3 336.5)" stroke-width="1.13" opacity="0.74"/><ellipse cx="433.4" cy="324.8" rx="5.4" ry="3.7" transform="rotate(173 433.4 324.8)" stroke-width="1.11" opacity="0.73"/><ellipse cx="441.3" cy="313.4" rx="5.3" ry="3.6" transform="rotate(173 441.3 313.4)" stroke-width="1.09" opacity="0.72"/><ellipse cx="449.0" cy="302.3" rx="5.2" ry="3.5" transform="rotate(174 449.0 302.3)" stroke-width="1.07" opacity="0.71"/><ellipse cx="456.5" cy="291.5" rx="5.2" ry="3.4" transform="rotate(175 456.5 291.5)" stroke-width="1.05" opacity="0.70"/><ellipse cx="463.8" cy="281.0" rx="5.1" ry="3.3" transform="rotate(175 463.8 281.0)" stroke-width="1.03" opacity="0.69"/><ellipse cx="470.9" cy="270.7" rx="5.0" ry="3.3" transform="rotate(176 470.9 270.7)" stroke-width="1.01" opacity="0.68"/><ellipse cx="477.9" cy="260.6" rx="5.0" ry="3.2" transform="rotate(176 477.9 260.6)" stroke-width="0.99" opacity="0.67"/><ellipse cx="484.7" cy="250.8" rx="4.9" ry="3.1" transform="rotate(176 484.7 250.8)" stroke-width="0.97" opacity="0.66"/><ellipse cx="491.3" cy="241.2" rx="4.8" ry="3.0" transform="rotate(177 491.3 241.2)" stroke-width="0.96" opacity="0.65"/><ellipse cx="497.8" cy="231.9" rx="4.8" ry="3.0" transform="rotate(177 497.8 231.9)" stroke-width="0.94" opacity="0.64"/><ellipse cx="504.1" cy="222.7" rx="4.7" ry="2.9" transform="rotate(177 504.1 222.7)" stroke-width="0.93" opacity="0.63"/><ellipse cx="510.3" cy="213.8" rx="4.7" ry="2.8" transform="rotate(178 510.3 213.8)" stroke-width="0.91" opacity="0.63"/><ellipse cx="516.4" cy="205.1" rx="4.6" ry="2.8" transform="rotate(178 516.4 205.1)" stroke-width="0.89" opacity="0.62"/><ellipse cx="522.3" cy="196.5" rx="4.6" ry="2.7" transform="rotate(178 522.3 196.5)" stroke-width="0.88" opacity="0.61"/><ellipse cx="528.1" cy="188.2" rx="4.5" ry="2.6" transform="rotate(178 528.1 188.2)" stroke-width="0.86" opacity="0.60"/><ellipse cx="533.7" cy="180.0" rx="4.5" ry="2.6" transform="rotate(179 533.7 180.0)" stroke-width="0.85" opacity="0.59"/><ellipse cx="539.3" cy="172.0" rx="4.4" ry="2.5" transform="rotate(179 539.3 172.0)" stroke-width="0.84" opacity="0.59"/><ellipse cx="544.7" cy="164.2" rx="4.4" ry="2.5" transform="rotate(179 544.7 164.2)" stroke-width="0.82" opacity="0.58"/><ellipse cx="550.0" cy="156.5" rx="4.3" ry="2.4" transform="rotate(179 550.0 156.5)" stroke-width="0.81" opacity="0.57"/><ellipse cx="327.1" cy="511.5" rx="6.7" ry="5.2" transform="rotate(158 327.1 511.5)" stroke-width="1.48" opacity="0.93"/><ellipse cx="338.2" cy="494.9" rx="6.6" ry="5.1" transform="rotate(160 338.2 494.9)" stroke-width="1.44" opacity="0.91"/><ellipse cx="349.1" cy="478.8" rx="6.4" ry="4.9" transform="rotate(162 349.1 478.8)" stroke-width="1.41" opacity="0.89"/><ellipse cx="359.6" cy="463.2" rx="6.3" ry="4.8" transform="rotate(163 359.6 463.2)" stroke-width="1.38" opacity="0.88"/><ellipse cx="369.7" cy="448.0" rx="6.2" ry="4.7" transform="rotate(165 369.7 448.0)" stroke-width="1.35" opacity="0.86"/><ellipse cx="379.6" cy="433.3" rx="6.1" ry="4.6" transform="rotate(166 379.6 433.3)" stroke-width="1.32" opacity="0.84"/><ellipse cx="389.2" cy="419.0" rx="6.0" ry="4.5" transform="rotate(167 389.2 419.0)" stroke-width="1.29" opacity="0.83"/><ellipse cx="398.6" cy="405.1" rx="5.9" ry="4.3" transform="rotate(169 398.6 405.1)" stroke-width="1.26" opacity="0.81"/><ellipse cx="407.6" cy="391.6" rx="5.8" ry="4.2" transform="rotate(170 407.6 391.6)" stroke-width="1.24" opacity="0.80"/><ellipse cx="416.5" cy="378.4" rx="5.7" ry="4.1" transform="rotate(170 416.5 378.4)" stroke-width="1.21" opacity="0.79"/><ellipse cx="425.0" cy="365.6" rx="5.6" ry="4.0" transform="rotate(171 425.0 365.6)" stroke-width="1.19" opacity="0.77"/><ellipse cx="433.4" cy="353.2" rx="5.5" ry="3.9" transform="rotate(172 433.4 353.2)" stroke-width="1.16" opacity="0.76"/><ellipse cx="441.5" cy="341.1" rx="5.5" ry="3.8" transform="rotate(173 441.5 341.1)" stroke-width="1.14" opacity="0.75"/><ellipse cx="449.5" cy="329.3" rx="5.4" ry="3.7" transform="rotate(174 449.5 329.3)" stroke-width="1.12" opacity="0.74"/><ellipse cx="457.2" cy="317.8" rx="5.3" ry="3.6" transform="rotate(174 457.2 317.8)" stroke-width="1.10" opacity="0.73"/><ellipse cx="464.7" cy="306.5" rx="5.2" ry="3.5" transform="rotate(175 464.7 306.5)" stroke-width="1.08" opacity="0.71"/><ellipse cx="472.0" cy="295.6" rx="5.2" ry="3.5" transform="rotate(175 472.0 295.6)" stroke-width="1.06" opacity="0.70"/><ellipse cx="479.2" cy="285.0" rx="5.1" ry="3.4" transform="rotate(176 479.2 285.0)" stroke-width="1.04" opacity="0.69"/><ellipse cx="486.2" cy="274.6" rx="5.0" ry="3.3" transform="rotate(176 486.2 274.6)" stroke-width="1.02" opacity="0.68"/><ellipse cx="493.0" cy="264.4" rx="5.0" ry="3.2" transform="rotate(177 493.0 264.4)" stroke-width="1.00" opacity="0.67"/><ellipse cx="499.6" cy="254.5" rx="4.9" ry="3.1" transform="rotate(177 499.6 254.5)" stroke-width="0.98" opacity="0.66"/><ellipse cx="506.1" cy="244.8" rx="4.9" ry="3.1" transform="rotate(177 506.1 244.8)" stroke-width="0.97" opacity="0.65"/><ellipse cx="512.5" cy="235.4" rx="4.8" ry="3.0" transform="rotate(178 512.5 235.4)" stroke-width="0.95" opacity="0.65"/><ellipse cx="518.7" cy="226.2" rx="4.8" ry="2.9" transform="rotate(178 518.7 226.2)" stroke-width="0.93" opacity="0.64"/><ellipse cx="524.7" cy="217.1" rx="4.7" ry="2.9" transform="rotate(178 524.7 217.1)" stroke-width="0.92" opacity="0.63"/><ellipse cx="530.6" cy="208.3" rx="4.6" ry="2.8" transform="rotate(179 530.6 208.3)" stroke-width="0.90" opacity="0.62"/><ellipse cx="536.4" cy="199.7" rx="4.6" ry="2.7" transform="rotate(179 536.4 199.7)" stroke-width="0.89" opacity="0.61"/><ellipse cx="542.1" cy="191.3" rx="4.5" ry="2.7" transform="rotate(179 542.1 191.3)" stroke-width="0.87" opacity="0.60"/><ellipse cx="547.6" cy="183.0" rx="4.5" ry="2.6" transform="rotate(179 547.6 183.0)" stroke-width="0.86" opacity="0.60"/><ellipse cx="553.0" cy="175.0" rx="4.4" ry="2.6" transform="rotate(179 553.0 175.0)" stroke-width="0.84" opacity="0.59"/><ellipse cx="558.3" cy="167.1" rx="4.4" ry="2.5" transform="rotate(180 558.3 167.1)" stroke-width="0.83" opacity="0.58"/><ellipse cx="563.5" cy="159.3" rx="4.4" ry="2.4" transform="rotate(180 563.5 159.3)" stroke-width="0.82" opacity="0.58"/><ellipse cx="345.8" cy="518.2" rx="6.7" ry="5.3" transform="rotate(159 345.8 518.2)" stroke-width="1.49" opacity="0.94"/><ellipse cx="356.7" cy="501.4" rx="6.6" ry="5.2" transform="rotate(161 356.7 501.4)" stroke-width="1.46" opacity="0.92"/><ellipse cx="367.3" cy="485.0" rx="6.5" ry="5.0" transform="rotate(163 367.3 485.0)" stroke-width="1.43" opacity="0.90"/><ellipse cx="377.6" cy="469.2" rx="6.3" ry="4.9" transform="rotate(164 377.6 469.2)" stroke-width="1.39" opacity="0.88"/><ellipse cx="387.6" cy="453.9" rx="6.2" ry="4.8" transform="rotate(166 387.6 453.9)" stroke-width="1.36" opacity="0.87"/><ellipse cx="397.3" cy="439.0" rx="6.1" ry="4.6" transform="rotate(167 397.3 439.0)" stroke-width="1.33" opacity="0.85"/><ellipse cx="406.7" cy="424.5" rx="6.0" ry="4.5" transform="rotate(168 406.7 424.5)" stroke-width="1.30" opacity="0.84"/><ellipse cx="415.8" cy="410.4" rx="5.9" ry="4.4" transform="rotate(169 415.8 410.4)" stroke-width="1.28" opacity="0.82"/><ellipse cx="424.7" cy="396.7" rx="5.8" ry="4.3" transform="rotate(170 424.7 396.7)" stroke-width="1.25" opacity="0.81"/><ellipse cx="433.4" cy="383.5" rx="5.7" ry="4.2" transform="rotate(171 433.4 383.5)" stroke-width="1.22" opacity="0.79"/><ellipse cx="441.8" cy="370.5" rx="5.7" ry="4.1" transform="rotate(172 441.8 370.5)" stroke-width="1.20" opacity="0.78"/><ellipse cx="450.0" cy="357.9" rx="5.6" ry="4.0" transform="rotate(173 450.0 357.9)" stroke-width="1.17" opacity="0.77"/><ellipse cx="457.9" cy="345.7" rx="5.5" ry="3.9" transform="rotate(174 457.9 345.7)" stroke-width="1.15" opacity="0.75"/><ellipse cx="465.7" cy="333.8" rx="5.4" ry="3.8" transform="rotate(174 465.7 333.8)" stroke-width="1.13" opacity="0.74"/><ellipse cx="473.2" cy="322.1" rx="5.3" ry="3.7" transform="rotate(175 473.2 322.1)" stroke-width="1.11" opacity="0.73"/><ellipse cx="480.6" cy="310.8" rx="5.3" ry="3.6" transform="rotate(176 480.6 310.8)" stroke-width="1.09" opacity="0.72"/><ellipse cx="487.8" cy="299.8" rx="5.2" ry="3.5" transform="rotate(176 487.8 299.8)" stroke-width="1.07" opacity="0.71"/><ellipse cx="494.8" cy="289.0" rx="5.1" ry="3.4" transform="rotate(177 494.8 289.0)" stroke-width="1.05" opacity="0.70"/><ellipse cx="501.6" cy="278.5" rx="5.1" ry="3.3" transform="rotate(177 501.6 278.5)" stroke-width="1.03" opacity="0.69"/><ellipse cx="508.2" cy="268.3" rx="5.0" ry="3.2" transform="rotate(177 508.2 268.3)" stroke-width="1.01" opacity="0.68"/><ellipse cx="514.7" cy="258.3" rx="4.9" ry="3.2" transform="rotate(178 514.7 258.3)" stroke-width="0.99" opacity="0.67"/><ellipse cx="521.1" cy="248.5" rx="4.9" ry="3.1" transform="rotate(178 521.1 248.5)" stroke-width="0.97" opacity="0.66"/><ellipse cx="527.3" cy="239.0" rx="4.8" ry="3.0" transform="rotate(178 527.3 239.0)" stroke-width="0.96" opacity="0.65"/><ellipse cx="533.3" cy="229.6" rx="4.8" ry="3.0" transform="rotate(179 533.3 229.6)" stroke-width="0.94" opacity="0.64"/><ellipse cx="539.3" cy="220.5" rx="4.7" ry="2.9" transform="rotate(179 539.3 220.5)" stroke-width="0.92" opacity="0.63"/><ellipse cx="545.0" cy="211.6" rx="4.7" ry="2.8" transform="rotate(179 545.0 211.6)" stroke-width="0.91" opacity="0.62"/><ellipse cx="550.7" cy="202.9" rx="4.6" ry="2.8" transform="rotate(179 550.7 202.9)" stroke-width="0.89" opacity="0.62"/><ellipse cx="556.2" cy="194.4" rx="4.6" ry="2.7" transform="rotate(180 556.2 194.4)" stroke-width="0.88" opacity="0.61"/><ellipse cx="561.6" cy="186.1" rx="4.5" ry="2.6" transform="rotate(180 561.6 186.1)" stroke-width="0.86" opacity="0.60"/><ellipse cx="566.9" cy="178.0" rx="4.5" ry="2.6" transform="rotate(-180 566.9 178.0)" stroke-width="0.85" opacity="0.59"/><ellipse cx="572.1" cy="170.0" rx="4.4" ry="2.5" transform="rotate(-180 572.1 170.0)" stroke-width="0.84" opacity="0.59"/><ellipse cx="577.2" cy="162.2" rx="4.4" ry="2.5" transform="rotate(-180 577.2 162.2)" stroke-width="0.82" opacity="0.58"/><ellipse cx="364.8" cy="524.9" rx="6.7" ry="5.4" transform="rotate(160 364.8 524.9)" stroke-width="1.50" opacity="0.94"/><ellipse cx="375.5" cy="507.9" rx="6.6" ry="5.3" transform="rotate(162 375.5 507.9)" stroke-width="1.47" opacity="0.93"/><ellipse cx="385.9" cy="491.4" rx="6.5" ry="5.1" transform="rotate(164 385.9 491.4)" stroke-width="1.44" opacity="0.91"/><ellipse cx="395.9" cy="475.3" rx="6.4" ry="5.0" transform="rotate(165 395.9 475.3)" stroke-width="1.41" opacity="0.89"/><ellipse cx="405.7" cy="459.8" rx="6.2" ry="4.8" transform="rotate(167 405.7 459.8)" stroke-width="1.38" opacity="0.87"/><ellipse cx="415.2" cy="444.7" rx="6.1" ry="4.7" transform="rotate(168 415.2 444.7)" stroke-width="1.35" opacity="0.86"/><ellipse cx="424.4" cy="430.1" rx="6.0" ry="4.6" transform="rotate(169 424.4 430.1)" stroke-width="1.32" opacity="0.84"/><ellipse cx="433.3" cy="415.8" rx="5.9" ry="4.5" transform="rotate(170 433.3 415.8)" stroke-width="1.29" opacity="0.83"/><ellipse cx="442.0" cy="402.0" rx="5.8" ry="4.3" transform="rotate(172 442.0 402.0)" stroke-width="1.26" opacity="0.81"/><ellipse cx="450.5" cy="388.6" rx="5.8" ry="4.2" transform="rotate(172 450.5 388.6)" stroke-width="1.23" opacity="0.80"/><ellipse cx="458.7" cy="375.5" rx="5.7" ry="4.1" transform="rotate(173 458.7 375.5)" stroke-width="1.21" opacity="0.79"/><ellipse cx="466.7" cy="362.8" rx="5.6" ry="4.0" transform="rotate(174 466.7 362.8)" stroke-width="1.19" opacity="0.77"/><ellipse cx="474.5" cy="350.4" rx="5.5" ry="3.9" transform="rotate(175 474.5 350.4)" stroke-width="1.16" opacity="0.76"/><ellipse cx="482.1" cy="338.3" rx="5.4" ry="3.8" transform="rotate(175 482.1 338.3)" stroke-width="1.14" opacity="0.75"/><ellipse cx="489.4" cy="326.6" rx="5.4" ry="3.7" transform="rotate(176 489.4 326.6)" stroke-width="1.12" opacity="0.74"/><ellipse cx="496.6" cy="315.1" rx="5.3" ry="3.6" transform="rotate(176 496.6 315.1)" stroke-width="1.10" opacity="0.72"/><ellipse cx="503.6" cy="304.0" rx="5.2" ry="3.5" transform="rotate(177 503.6 304.0)" stroke-width="1.07" opacity="0.71"/><ellipse cx="510.5" cy="293.1" rx="5.2" ry="3.4" transform="rotate(177 510.5 293.1)" stroke-width="1.05" opacity="0.70"/><ellipse cx="517.2" cy="282.5" rx="5.1" ry="3.4" transform="rotate(178 517.2 282.5)" stroke-width="1.03" opacity="0.69"/><ellipse cx="523.7" cy="272.1" rx="5.0" ry="3.3" transform="rotate(178 523.7 272.1)" stroke-width="1.02" opacity="0.68"/><ellipse cx="530.0" cy="262.0" rx="5.0" ry="3.2" transform="rotate(178 530.0 262.0)" stroke-width="1.00" opacity="0.67"/><ellipse cx="536.2" cy="252.2" rx="4.9" ry="3.1" transform="rotate(179 536.2 252.2)" stroke-width="0.98" opacity="0.66"/><ellipse cx="542.3" cy="242.6" rx="4.9" ry="3.1" transform="rotate(179 542.3 242.6)" stroke-width="0.96" opacity="0.65"/><ellipse cx="548.2" cy="233.1" rx="4.8" ry="3.0" transform="rotate(179 548.2 233.1)" stroke-width="0.95" opacity="0.64"/><ellipse cx="553.9" cy="224.0" rx="4.7" ry="2.9" transform="rotate(180 553.9 224.0)" stroke-width="0.93" opacity="0.64"/><ellipse cx="559.6" cy="215.0" rx="4.7" ry="2.8" transform="rotate(180 559.6 215.0)" stroke-width="0.91" opacity="0.63"/><ellipse cx="565.1" cy="206.2" rx="4.6" ry="2.8" transform="rotate(-180 565.1 206.2)" stroke-width="0.90" opacity="0.62"/><ellipse cx="570.5" cy="197.6" rx="4.6" ry="2.7" transform="rotate(-180 570.5 197.6)" stroke-width="0.88" opacity="0.61"/><ellipse cx="575.8" cy="189.2" rx="4.5" ry="2.7" transform="rotate(-180 575.8 189.2)" stroke-width="0.87" opacity="0.60"/><ellipse cx="580.9" cy="181.0" rx="4.5" ry="2.6" transform="rotate(-179 580.9 181.0)" stroke-width="0.85" opacity="0.60"/><ellipse cx="586.0" cy="173.0" rx="4.4" ry="2.5" transform="rotate(-179 586.0 173.0)" stroke-width="0.84" opacity="0.59"/><ellipse cx="590.9" cy="165.1" rx="4.4" ry="2.5" transform="rotate(-179 590.9 165.1)" stroke-width="0.83" opacity="0.58"/><ellipse cx="384.0" cy="531.8" rx="6.8" ry="5.5" transform="rotate(161 384.0 531.8)" stroke-width="1.50" opacity="0.95"/><ellipse cx="394.5" cy="514.5" rx="6.6" ry="5.4" transform="rotate(163 394.5 514.5)" stroke-width="1.49" opacity="0.93"/><ellipse cx="404.6" cy="497.8" rx="6.5" ry="5.2" transform="rotate(165 404.6 497.8)" stroke-width="1.45" opacity="0.92"/><ellipse cx="414.5" cy="481.6" rx="6.4" ry="5.1" transform="rotate(166 414.5 481.6)" stroke-width="1.42" opacity="0.90"/><ellipse cx="424.0" cy="465.8" rx="6.3" ry="4.9" transform="rotate(168 424.0 465.8)" stroke-width="1.39" opacity="0.88"/><ellipse cx="433.3" cy="450.5" rx="6.2" ry="4.8" transform="rotate(169 433.3 450.5)" stroke-width="1.36" opacity="0.86"/><ellipse cx="442.3" cy="435.7" rx="6.1" ry="4.7" transform="rotate(171 442.3 435.7)" stroke-width="1.33" opacity="0.85"/><ellipse cx="451.0" cy="421.3" rx="6.0" ry="4.5" transform="rotate(172 451.0 421.3)" stroke-width="1.30" opacity="0.83"/><ellipse cx="459.5" cy="407.3" rx="5.9" ry="4.4" transform="rotate(173 459.5 407.3)" stroke-width="1.27" opacity="0.82"/><ellipse cx="467.8" cy="393.7" rx="5.8" ry="4.3" transform="rotate(174 467.8 393.7)" stroke-width="1.25" opacity="0.80"/><ellipse cx="475.8" cy="380.5" rx="5.7" ry="4.2" transform="rotate(174 475.8 380.5)" stroke-width="1.22" opacity="0.79"/><ellipse cx="483.6" cy="367.6" rx="5.6" ry="4.1" transform="rotate(175 483.6 367.6)" stroke-width="1.20" opacity="0.78"/><ellipse cx="491.2" cy="355.1" rx="5.5" ry="4.0" transform="rotate(176 491.2 355.1)" stroke-width="1.17" opacity="0.76"/><ellipse cx="498.6" cy="342.9" rx="5.5" ry="3.9" transform="rotate(176 498.6 342.9)" stroke-width="1.15" opacity="0.75"/><ellipse cx="505.8" cy="331.1" rx="5.4" ry="3.8" transform="rotate(177 505.8 331.1)" stroke-width="1.13" opacity="0.74"/><ellipse cx="512.9" cy="319.5" rx="5.3" ry="3.7" transform="rotate(177 512.9 319.5)" stroke-width="1.10" opacity="0.73"/><ellipse cx="519.7" cy="308.2" rx="5.3" ry="3.6" transform="rotate(178 519.7 308.2)" stroke-width="1.08" opacity="0.72"/><ellipse cx="526.4" cy="297.2" rx="5.2" ry="3.5" transform="rotate(178 526.4 297.2)" stroke-width="1.06" opacity="0.71"/><ellipse cx="532.9" cy="286.5" rx="5.1" ry="3.4" transform="rotate(179 532.9 286.5)" stroke-width="1.04" opacity="0.70"/><ellipse cx="539.2" cy="276.1" rx="5.1" ry="3.3" transform="rotate(179 539.2 276.1)" stroke-width="1.02" opacity="0.69"/><ellipse cx="545.4" cy="265.9" rx="5.0" ry="3.2" transform="rotate(179 545.4 265.9)" stroke-width="1.01" opacity="0.68"/><ellipse cx="551.5" cy="255.9" rx="4.9" ry="3.2" transform="rotate(180 551.5 255.9)" stroke-width="0.99" opacity="0.67"/><ellipse cx="557.4" cy="246.2" rx="4.9" ry="3.1" transform="rotate(180 557.4 246.2)" stroke-width="0.97" opacity="0.66"/><ellipse cx="563.1" cy="236.7" rx="4.8" ry="3.0" transform="rotate(-180 563.1 236.7)" stroke-width="0.95" opacity="0.65"/><ellipse cx="568.8" cy="227.4" rx="4.8" ry="2.9" transform="rotate(-180 568.8 227.4)" stroke-width="0.94" opacity="0.64"/><ellipse cx="574.3" cy="218.4" rx="4.7" ry="2.9" transform="rotate(-180 574.3 218.4)" stroke-width="0.92" opacity="0.63"/><ellipse cx="579.6" cy="209.5" rx="4.7" ry="2.8" transform="rotate(-179 579.6 209.5)" stroke-width="0.91" opacity="0.62"/><ellipse cx="584.9" cy="200.8" rx="4.6" ry="2.7" transform="rotate(-179 584.9 200.8)" stroke-width="0.89" opacity="0.61"/><ellipse cx="590.0" cy="192.4" rx="4.6" ry="2.7" transform="rotate(-179 590.0 192.4)" stroke-width="0.88" opacity="0.61"/><ellipse cx="595.1" cy="184.1" rx="4.5" ry="2.6" transform="rotate(-179 595.1 184.1)" stroke-width="0.86" opacity="0.60"/><ellipse cx="600.0" cy="176.0" rx="4.5" ry="2.6" transform="rotate(-179 600.0 176.0)" stroke-width="0.85" opacity="0.59"/><ellipse cx="604.8" cy="168.1" rx="4.4" ry="2.5" transform="rotate(-179 604.8 168.1)" stroke-width="0.83" opacity="0.58"/><ellipse cx="403.5" cy="538.7" rx="6.8" ry="5.6" transform="rotate(162 403.5 538.7)" stroke-width="1.50" opacity="0.96"/><ellipse cx="413.7" cy="521.2" rx="6.6" ry="5.4" transform="rotate(164 413.7 521.2)" stroke-width="1.50" opacity="0.94"/><ellipse cx="423.6" cy="504.3" rx="6.5" ry="5.3" transform="rotate(166 423.6 504.3)" stroke-width="1.47" opacity="0.92"/><ellipse cx="433.3" cy="487.8" rx="6.4" ry="5.1" transform="rotate(168 433.3 487.8)" stroke-width="1.43" opacity="0.91"/><ellipse cx="442.6" cy="471.9" rx="6.3" ry="5.0" transform="rotate(169 442.6 471.9)" stroke-width="1.40" opacity="0.89"/><ellipse cx="451.6" cy="456.5" rx="6.2" ry="4.9" transform="rotate(171 451.6 456.5)" stroke-width="1.37" opacity="0.87"/><ellipse cx="460.4" cy="441.4" rx="6.1" ry="4.7" transform="rotate(172 460.4 441.4)" stroke-width="1.34" opacity="0.86"/><ellipse cx="469.0" cy="426.9" rx="6.0" ry="4.6" transform="rotate(173 469.0 426.9)" stroke-width="1.31" opacity="0.84"/><ellipse cx="477.3" cy="412.7" rx="5.9" ry="4.5" transform="rotate(174 477.3 412.7)" stroke-width="1.28" opacity="0.82"/><ellipse cx="485.3" cy="399.0" rx="5.8" ry="4.4" transform="rotate(175 485.3 399.0)" stroke-width="1.26" opacity="0.81"/><ellipse cx="493.2" cy="385.6" rx="5.7" ry="4.2" transform="rotate(176 493.2 385.6)" stroke-width="1.23" opacity="0.80"/><ellipse cx="500.8" cy="372.6" rx="5.6" ry="4.1" transform="rotate(176 500.8 372.6)" stroke-width="1.21" opacity="0.78"/><ellipse cx="508.2" cy="359.9" rx="5.6" ry="4.0" transform="rotate(177 508.2 359.9)" stroke-width="1.18" opacity="0.77"/><ellipse cx="515.4" cy="347.6" rx="5.5" ry="3.9" transform="rotate(177 515.4 347.6)" stroke-width="1.16" opacity="0.76"/><ellipse cx="522.4" cy="335.6" rx="5.4" ry="3.8" transform="rotate(178 522.4 335.6)" stroke-width="1.14" opacity="0.75"/><ellipse cx="529.3" cy="323.9" rx="5.4" ry="3.7" transform="rotate(178 529.3 323.9)" stroke-width="1.11" opacity="0.73"/><ellipse cx="536.0" cy="312.5" rx="5.3" ry="3.6" transform="rotate(179 536.0 312.5)" stroke-width="1.09" opacity="0.72"/><ellipse cx="542.5" cy="301.4" rx="5.2" ry="3.5" transform="rotate(179 542.5 301.4)" stroke-width="1.07" opacity="0.71"/><ellipse cx="548.8" cy="290.6" rx="5.2" ry="3.4" transform="rotate(179 548.8 290.6)" stroke-width="1.05" opacity="0.70"/><ellipse cx="555.0" cy="280.0" rx="5.1" ry="3.3" transform="rotate(180 555.0 280.0)" stroke-width="1.03" opacity="0.69"/><ellipse cx="561.0" cy="269.7" rx="5.0" ry="3.3" transform="rotate(-180 561.0 269.7)" stroke-width="1.01" opacity="0.68"/><ellipse cx="566.9" cy="259.7" rx="5.0" ry="3.2" transform="rotate(-180 566.9 259.7)" stroke-width="1.00" opacity="0.67"/><ellipse cx="572.7" cy="249.9" rx="4.9" ry="3.1" transform="rotate(-179 572.7 249.9)" stroke-width="0.98" opacity="0.66"/><ellipse cx="578.3" cy="240.3" rx="4.9" ry="3.0" transform="rotate(-179 578.3 240.3)" stroke-width="0.96" opacity="0.65"/><ellipse cx="583.7" cy="230.9" rx="4.8" ry="3.0" transform="rotate(-179 583.7 230.9)" stroke-width="0.94" opacity="0.64"/><ellipse cx="589.1" cy="221.8" rx="4.7" ry="2.9" transform="rotate(-179 589.1 221.8)" stroke-width="0.93" opacity="0.63"/><ellipse cx="594.3" cy="212.8" rx="4.7" ry="2.8" transform="rotate(-179 594.3 212.8)" stroke-width="0.91" opacity="0.63"/><ellipse cx="599.5" cy="204.1" rx="4.6" ry="2.8" transform="rotate(-179 599.5 204.1)" stroke-width="0.90" opacity="0.62"/><ellipse cx="604.5" cy="195.5" rx="4.6" ry="2.7" transform="rotate(-178 604.5 195.5)" stroke-width="0.88" opacity="0.61"/><ellipse cx="609.4" cy="187.2" rx="4.5" ry="2.6" transform="rotate(-178 609.4 187.2)" stroke-width="0.87" opacity="0.60"/><ellipse cx="614.1" cy="179.0" rx="4.5" ry="2.6" transform="rotate(-178 614.1 179.0)" stroke-width="0.85" opacity="0.59"/><ellipse cx="618.8" cy="171.0" rx="4.4" ry="2.5" transform="rotate(-178 618.8 171.0)" stroke-width="0.84" opacity="0.59"/><ellipse cx="423.2" cy="545.8" rx="6.8" ry="5.7" transform="rotate(163 423.2 545.8)" stroke-width="1.50" opacity="0.97"/><ellipse cx="433.2" cy="528.0" rx="6.7" ry="5.5" transform="rotate(165 433.2 528.0)" stroke-width="1.50" opacity="0.95"/><ellipse cx="442.9" cy="510.9" rx="6.5" ry="5.4" transform="rotate(167 442.9 510.9)" stroke-width="1.48" opacity="0.93"/><ellipse cx="452.3" cy="494.2" rx="6.4" ry="5.2" transform="rotate(169 452.3 494.2)" stroke-width="1.45" opacity="0.91"/><ellipse cx="461.4" cy="478.1" rx="6.3" ry="5.1" transform="rotate(171 461.4 478.1)" stroke-width="1.42" opacity="0.90"/><ellipse cx="470.2" cy="462.4" rx="6.2" ry="4.9" transform="rotate(172 470.2 462.4)" stroke-width="1.38" opacity="0.88"/><ellipse cx="478.8" cy="447.2" rx="6.1" ry="4.8" transform="rotate(173 478.8 447.2)" stroke-width="1.35" opacity="0.86"/><ellipse cx="487.1" cy="432.5" rx="6.0" ry="4.7" transform="rotate(174 487.1 432.5)" stroke-width="1.32" opacity="0.85"/><ellipse cx="495.2" cy="418.2" rx="5.9" ry="4.5" transform="rotate(175 495.2 418.2)" stroke-width="1.30" opacity="0.83"/><ellipse cx="503.1" cy="404.3" rx="5.8" ry="4.4" transform="rotate(176 503.1 404.3)" stroke-width="1.27" opacity="0.82"/><ellipse cx="510.7" cy="390.7" rx="5.8" ry="4.3" transform="rotate(177 510.7 390.7)" stroke-width="1.24" opacity="0.80"/><ellipse cx="518.1" cy="377.6" rx="5.7" ry="4.2" transform="rotate(177 518.1 377.6)" stroke-width="1.22" opacity="0.79"/><ellipse cx="525.3" cy="364.8" rx="5.6" ry="4.1" transform="rotate(178 525.3 364.8)" stroke-width="1.19" opacity="0.78"/><ellipse cx="532.4" cy="352.3" rx="5.5" ry="4.0" transform="rotate(178 532.4 352.3)" stroke-width="1.17" opacity="0.76"/><ellipse cx="539.2" cy="340.2" rx="5.5" ry="3.8" transform="rotate(179 539.2 340.2)" stroke-width="1.15" opacity="0.75"/><ellipse cx="545.9" cy="328.4" rx="5.4" ry="3.7" transform="rotate(179 545.9 328.4)" stroke-width="1.12" opacity="0.74"/><ellipse cx="552.4" cy="316.8" rx="5.3" ry="3.7" transform="rotate(180 552.4 316.8)" stroke-width="1.10" opacity="0.73"/><ellipse cx="558.7" cy="305.6" rx="5.2" ry="3.6" transform="rotate(-180 558.7 305.6)" stroke-width="1.08" opacity="0.72"/><ellipse cx="564.9" cy="294.7" rx="5.2" ry="3.5" transform="rotate(-180 564.9 294.7)" stroke-width="1.06" opacity="0.71"/><ellipse cx="570.9" cy="284.0" rx="5.1" ry="3.4" transform="rotate(-179 570.9 284.0)" stroke-width="1.04" opacity="0.69"/><ellipse cx="576.8" cy="273.6" rx="5.1" ry="3.3" transform="rotate(-179 576.8 273.6)" stroke-width="1.02" opacity="0.68"/><ellipse cx="582.5" cy="263.5" rx="5.0" ry="3.2" transform="rotate(-179 582.5 263.5)" stroke-width="1.00" opacity="0.67"/><ellipse cx="588.1" cy="253.6" rx="4.9" ry="3.1" transform="rotate(-179 588.1 253.6)" stroke-width="0.98" opacity="0.67"/><ellipse cx="593.5" cy="243.9" rx="4.9" ry="3.1" transform="rotate(-178 593.5 243.9)" stroke-width="0.97" opacity="0.66"/><ellipse cx="598.9" cy="234.4" rx="4.8" ry="3.0" transform="rotate(-178 598.9 234.4)" stroke-width="0.95" opacity="0.65"/><ellipse cx="604.1" cy="225.2" rx="4.8" ry="2.9" transform="rotate(-178 604.1 225.2)" stroke-width="0.93" opacity="0.64"/><ellipse cx="609.2" cy="216.2" rx="4.7" ry="2.9" transform="rotate(-178 609.2 216.2)" stroke-width="0.92" opacity="0.63"/><ellipse cx="614.1" cy="207.4" rx="4.7" ry="2.8" transform="rotate(-178 614.1 207.4)" stroke-width="0.90" opacity="0.62"/><ellipse cx="619.0" cy="198.7" rx="4.6" ry="2.7" transform="rotate(-178 619.0 198.7)" stroke-width="0.89" opacity="0.61"/><ellipse cx="623.8" cy="190.3" rx="4.6" ry="2.7" transform="rotate(-178 623.8 190.3)" stroke-width="0.87" opacity="0.61"/><ellipse cx="628.4" cy="182.1" rx="4.5" ry="2.6" transform="rotate(-178 628.4 182.1)" stroke-width="0.86" opacity="0.60"/><ellipse cx="633.0" cy="174.0" rx="4.5" ry="2.6" transform="rotate(-177 633.0 174.0)" stroke-width="0.85" opacity="0.59"/><ellipse cx="443.3" cy="552.9" rx="6.8" ry="5.8" transform="rotate(165 443.3 552.9)" stroke-width="1.50" opacity="0.98"/><ellipse cx="453.0" cy="534.9" rx="6.7" ry="5.6" transform="rotate(167 453.0 534.9)" stroke-width="1.50" opacity="0.96"/><ellipse cx="462.4" cy="517.5" rx="6.6" ry="5.5" transform="rotate(169 462.4 517.5)" stroke-width="1.50" opacity="0.94"/><ellipse cx="471.6" cy="500.7" rx="6.4" ry="5.3" transform="rotate(171 471.6 500.7)" stroke-width="1.46" opacity="0.92"/><ellipse cx="480.5" cy="484.3" rx="6.3" ry="5.2" transform="rotate(172 480.5 484.3)" stroke-width="1.43" opacity="0.90"/><ellipse cx="489.1" cy="468.5" rx="6.2" ry="5.0" transform="rotate(174 489.1 468.5)" stroke-width="1.40" opacity="0.89"/><ellipse cx="497.4" cy="453.1" rx="6.1" ry="4.9" transform="rotate(175 497.4 453.1)" stroke-width="1.37" opacity="0.87"/><ellipse cx="505.5" cy="438.2" rx="6.0" ry="4.7" transform="rotate(176 505.5 438.2)" stroke-width="1.34" opacity="0.85"/><ellipse cx="513.4" cy="423.7" rx="6.0" ry="4.6" transform="rotate(177 513.4 423.7)" stroke-width="1.31" opacity="0.84"/><ellipse cx="521.0" cy="409.6" rx="5.9" ry="4.5" transform="rotate(177 521.0 409.6)" stroke-width="1.28" opacity="0.82"/><ellipse cx="528.4" cy="395.9" rx="5.8" ry="4.3" transform="rotate(178 528.4 395.9)" stroke-width="1.25" opacity="0.81"/><ellipse cx="535.7" cy="382.6" rx="5.7" ry="4.2" transform="rotate(179 535.7 382.6)" stroke-width="1.23" opacity="0.79"/><ellipse cx="542.7" cy="369.7" rx="5.6" ry="4.1" transform="rotate(179 542.7 369.7)" stroke-width="1.20" opacity="0.78"/><ellipse cx="549.5" cy="357.1" rx="5.6" ry="4.0" transform="rotate(180 549.5 357.1)" stroke-width="1.18" opacity="0.77"/><ellipse cx="556.2" cy="344.8" rx="5.5" ry="3.9" transform="rotate(-180 556.2 344.8)" stroke-width="1.15" opacity="0.76"/><ellipse cx="562.7" cy="332.9" rx="5.4" ry="3.8" transform="rotate(-180 562.7 332.9)" stroke-width="1.13" opacity="0.74"/><ellipse cx="569.0" cy="321.2" rx="5.3" ry="3.7" transform="rotate(-179 569.0 321.2)" stroke-width="1.11" opacity="0.73"/><ellipse cx="575.1" cy="309.9" rx="5.3" ry="3.6" transform="rotate(-179 575.1 309.9)" stroke-width="1.09" opacity="0.72"/><ellipse cx="581.1" cy="298.9" rx="5.2" ry="3.5" transform="rotate(-179 581.1 298.9)" stroke-width="1.07" opacity="0.71"/><ellipse cx="587.0" cy="288.1" rx="5.2" ry="3.4" transform="rotate(-178 587.0 288.1)" stroke-width="1.05" opacity="0.70"/><ellipse cx="592.7" cy="277.6" rx="5.1" ry="3.3" transform="rotate(-178 592.7 277.6)" stroke-width="1.03" opacity="0.69"/><ellipse cx="598.2" cy="267.3" rx="5.0" ry="3.2" transform="rotate(-178 598.2 267.3)" stroke-width="1.01" opacity="0.68"/><ellipse cx="603.7" cy="257.3" rx="5.0" ry="3.2" transform="rotate(-178 603.7 257.3)" stroke-width="0.99" opacity="0.67"/><ellipse cx="609.0" cy="247.5" rx="4.9" ry="3.1" transform="rotate(-178 609.0 247.5)" stroke-width="0.97" opacity="0.66"/><ellipse cx="614.2" cy="238.0" rx="4.9" ry="3.0" transform="rotate(-178 614.2 238.0)" stroke-width="0.96" opacity="0.65"/><ellipse cx="619.2" cy="228.7" rx="4.8" ry="3.0" transform="rotate(-177 619.2 228.7)" stroke-width="0.94" opacity="0.64"/><ellipse cx="624.2" cy="219.6" rx="4.8" ry="2.9" transform="rotate(-177 624.2 219.6)" stroke-width="0.93" opacity="0.63"/><ellipse cx="629.0" cy="210.7" rx="4.7" ry="2.8" transform="rotate(-177 629.0 210.7)" stroke-width="0.91" opacity="0.63"/><ellipse cx="633.7" cy="202.0" rx="4.6" ry="2.8" transform="rotate(-177 633.7 202.0)" stroke-width="0.89" opacity="0.62"/><ellipse cx="638.3" cy="193.5" rx="4.6" ry="2.7" transform="rotate(-177 638.3 193.5)" stroke-width="0.88" opacity="0.61"/><ellipse cx="642.8" cy="185.1" rx="4.6" ry="2.6" transform="rotate(-177 642.8 185.1)" stroke-width="0.87" opacity="0.60"/><ellipse cx="647.3" cy="177.0" rx="4.5" ry="2.6" transform="rotate(-177 647.3 177.0)" stroke-width="0.85" opacity="0.59"/><ellipse cx="463.6" cy="560.1" rx="6.8" ry="5.9" transform="rotate(167 463.6 560.1)" stroke-width="1.50" opacity="0.99"/><ellipse cx="473.1" cy="541.9" rx="6.7" ry="5.7" transform="rotate(169 473.1 541.9)" stroke-width="1.50" opacity="0.97"/><ellipse cx="482.2" cy="524.3" rx="6.6" ry="5.6" transform="rotate(171 482.2 524.3)" stroke-width="1.50" opacity="0.95"/><ellipse cx="491.1" cy="507.2" rx="6.5" ry="5.4" transform="rotate(173 491.1 507.2)" stroke-width="1.48" opacity="0.93"/><ellipse cx="499.8" cy="490.7" rx="6.4" ry="5.2" transform="rotate(174 499.8 490.7)" stroke-width="1.44" opacity="0.91"/><ellipse cx="508.1" cy="474.6" rx="6.3" ry="5.1" transform="rotate(176 508.1 474.6)" stroke-width="1.41" opacity="0.89"/><ellipse cx="516.2" cy="459.1" rx="6.2" ry="4.9" transform="rotate(177 516.2 459.1)" stroke-width="1.38" opacity="0.88"/><ellipse cx="524.1" cy="444.0" rx="6.1" ry="4.8" transform="rotate(178 524.1 444.0)" stroke-width="1.35" opacity="0.86"/><ellipse cx="531.8" cy="429.3" rx="6.0" ry="4.7" transform="rotate(178 531.8 429.3)" stroke-width="1.32" opacity="0.84"/><ellipse cx="539.2" cy="415.0" rx="5.9" ry="4.5" transform="rotate(179 539.2 415.0)" stroke-width="1.29" opacity="0.83"/><ellipse cx="546.4" cy="401.2" rx="5.8" ry="4.4" transform="rotate(180 546.4 401.2)" stroke-width="1.26" opacity="0.81"/><ellipse cx="553.4" cy="387.7" rx="5.7" ry="4.3" transform="rotate(-180 553.4 387.7)" stroke-width="1.24" opacity="0.80"/><ellipse cx="560.2" cy="374.6" rx="5.7" ry="4.2" transform="rotate(-180 560.2 374.6)" stroke-width="1.21" opacity="0.79"/><ellipse cx="566.9" cy="361.9" rx="5.6" ry="4.0" transform="rotate(-179 566.9 361.9)" stroke-width="1.19" opacity="0.77"/><ellipse cx="573.3" cy="349.5" rx="5.5" ry="3.9" transform="rotate(-179 573.3 349.5)" stroke-width="1.16" opacity="0.76"/><ellipse cx="579.6" cy="337.4" rx="5.4" ry="3.8" transform="rotate(-179 579.6 337.4)" stroke-width="1.14" opacity="0.75"/><ellipse cx="585.8" cy="325.7" rx="5.4" ry="3.7" transform="rotate(-178 585.8 325.7)" stroke-width="1.12" opacity="0.74"/><ellipse cx="591.7" cy="314.2" rx="5.3" ry="3.6" transform="rotate(-178 591.7 314.2)" stroke-width="1.10" opacity="0.73"/><ellipse cx="597.6" cy="303.1" rx="5.2" ry="3.5" transform="rotate(-178 597.6 303.1)" stroke-width="1.08" opacity="0.71"/><ellipse cx="603.2" cy="292.2" rx="5.2" ry="3.4" transform="rotate(-178 603.2 292.2)" stroke-width="1.06" opacity="0.70"/><ellipse cx="608.8" cy="281.6" rx="5.1" ry="3.4" transform="rotate(-177 608.8 281.6)" stroke-width="1.04" opacity="0.69"/><ellipse cx="614.2" cy="271.2" rx="5.1" ry="3.3" transform="rotate(-177 614.2 271.2)" stroke-width="1.02" opacity="0.68"/><ellipse cx="619.4" cy="261.1" rx="5.0" ry="3.2" transform="rotate(-177 619.4 261.1)" stroke-width="1.00" opacity="0.67"/><ellipse cx="624.6" cy="251.2" rx="4.9" ry="3.1" transform="rotate(-177 624.6 251.2)" stroke-width="0.98" opacity="0.66"/><ellipse cx="629.6" cy="241.6" rx="4.9" ry="3.0" transform="rotate(-177 629.6 241.6)" stroke-width="0.97" opacity="0.65"/><ellipse cx="634.5" cy="232.2" rx="4.8" ry="3.0" transform="rotate(-177 634.5 232.2)" stroke-width="0.95" opacity="0.65"/><ellipse cx="639.3" cy="223.0" rx="4.8" ry="2.9" transform="rotate(-177 639.3 223.0)" stroke-width="0.93" opacity="0.64"/><ellipse cx="644.0" cy="214.0" rx="4.7" ry="2.8" transform="rotate(-177 644.0 214.0)" stroke-width="0.92" opacity="0.63"/><ellipse cx="648.5" cy="205.2" rx="4.7" ry="2.8" transform="rotate(-177 648.5 205.2)" stroke-width="0.90" opacity="0.62"/><ellipse cx="653.0" cy="196.7" rx="4.6" ry="2.7" transform="rotate(-176 653.0 196.7)" stroke-width="0.89" opacity="0.61"/><ellipse cx="657.4" cy="188.3" rx="4.6" ry="2.7" transform="rotate(-176 657.4 188.3)" stroke-width="0.87" opacity="0.60"/><ellipse cx="661.7" cy="180.0" rx="4.5" ry="2.6" transform="rotate(-176 661.7 180.0)" stroke-width="0.86" opacity="0.60"/><ellipse cx="484.2" cy="567.5" rx="6.9" ry="6.0" transform="rotate(169 484.2 567.5)" stroke-width="1.50" opacity="1.00"/><ellipse cx="493.4" cy="549.0" rx="6.7" ry="5.8" transform="rotate(172 493.4 549.0)" stroke-width="1.50" opacity="0.98"/><ellipse cx="502.3" cy="531.2" rx="6.6" ry="5.7" transform="rotate(174 502.3 531.2)" stroke-width="1.50" opacity="0.96"/><ellipse cx="511.0" cy="513.9" rx="6.5" ry="5.5" transform="rotate(175 511.0 513.9)" stroke-width="1.49" opacity="0.94"/><ellipse cx="519.3" cy="497.1" rx="6.4" ry="5.3" transform="rotate(176 519.3 497.1)" stroke-width="1.46" opacity="0.92"/><ellipse cx="527.5" cy="480.8" rx="6.3" ry="5.2" transform="rotate(178 527.5 480.8)" stroke-width="1.43" opacity="0.90"/><ellipse cx="535.3" cy="465.1" rx="6.2" ry="5.0" transform="rotate(179 535.3 465.1)" stroke-width="1.39" opacity="0.88"/><ellipse cx="543.0" cy="449.8" rx="6.1" ry="4.9" transform="rotate(179 543.0 449.8)" stroke-width="1.36" opacity="0.87"/><ellipse cx="550.4" cy="434.9" rx="6.0" ry="4.7" transform="rotate(180 550.4 434.9)" stroke-width="1.33" opacity="0.85"/><ellipse cx="557.6" cy="420.5" rx="5.9" ry="4.6" transform="rotate(-180 557.6 420.5)" stroke-width="1.30" opacity="0.84"/><ellipse cx="564.6" cy="406.5" rx="5.9" ry="4.4" transform="rotate(-179 564.6 406.5)" stroke-width="1.28" opacity="0.82"/><ellipse cx="571.4" cy="392.9" rx="5.8" ry="4.3" transform="rotate(-179 571.4 392.9)" stroke-width="1.25" opacity="0.81"/><ellipse cx="578.0" cy="379.7" rx="5.7" ry="4.2" transform="rotate(-178 578.0 379.7)" stroke-width="1.22" opacity="0.79"/><ellipse cx="584.4" cy="366.8" rx="5.6" ry="4.1" transform="rotate(-178 584.4 366.8)" stroke-width="1.20" opacity="0.78"/><ellipse cx="590.7" cy="354.2" rx="5.6" ry="4.0" transform="rotate(-178 590.7 354.2)" stroke-width="1.17" opacity="0.77"/><ellipse cx="596.8" cy="342.0" rx="5.5" ry="3.9" transform="rotate(-177 596.8 342.0)" stroke-width="1.15" opacity="0.75"/><ellipse cx="602.7" cy="330.2" rx="5.4" ry="3.8" transform="rotate(-177 602.7 330.2)" stroke-width="1.13" opacity="0.74"/><ellipse cx="608.5" cy="318.6" rx="5.4" ry="3.7" transform="rotate(-177 608.5 318.6)" stroke-width="1.11" opacity="0.73"/><ellipse cx="614.2" cy="307.3" rx="5.3" ry="3.6" transform="rotate(-177 614.2 307.3)" stroke-width="1.09" opacity="0.72"/><ellipse cx="619.7" cy="296.3" rx="5.2" ry="3.5" transform="rotate(-177 619.7 296.3)" stroke-width="1.07" opacity="0.71"/><ellipse cx="625.0" cy="285.6" rx="5.2" ry="3.4" transform="rotate(-177 625.0 285.6)" stroke-width="1.05" opacity="0.70"/><ellipse cx="630.2" cy="275.1" rx="5.1" ry="3.3" transform="rotate(-176 630.2 275.1)" stroke-width="1.03" opacity="0.69"/><ellipse cx="635.3" cy="264.9" rx="5.0" ry="3.2" transform="rotate(-176 635.3 264.9)" stroke-width="1.01" opacity="0.68"/><ellipse cx="640.3" cy="255.0" rx="5.0" ry="3.1" transform="rotate(-176 640.3 255.0)" stroke-width="0.99" opacity="0.67"/><ellipse cx="645.2" cy="245.2" rx="4.9" ry="3.1" transform="rotate(-176 645.2 245.2)" stroke-width="0.97" opacity="0.66"/><ellipse cx="649.9" cy="235.7" rx="4.9" ry="3.0" transform="rotate(-176 649.9 235.7)" stroke-width="0.96" opacity="0.65"/><ellipse cx="654.6" cy="226.5" rx="4.8" ry="2.9" transform="rotate(-176 654.6 226.5)" stroke-width="0.94" opacity="0.64"/><ellipse cx="659.1" cy="217.4" rx="4.8" ry="2.9" transform="rotate(-176 659.1 217.4)" stroke-width="0.92" opacity="0.63"/><ellipse cx="663.5" cy="208.5" rx="4.7" ry="2.8" transform="rotate(-176 663.5 208.5)" stroke-width="0.91" opacity="0.62"/><ellipse cx="667.8" cy="199.9" rx="4.7" ry="2.7" transform="rotate(-176 667.8 199.9)" stroke-width="0.89" opacity="0.62"/><ellipse cx="672.1" cy="191.4" rx="4.6" ry="2.7" transform="rotate(-176 672.1 191.4)" stroke-width="0.88" opacity="0.61"/><ellipse cx="676.2" cy="183.1" rx="4.6" ry="2.6" transform="rotate(-176 676.2 183.1)" stroke-width="0.86" opacity="0.60"/><ellipse cx="505.1" cy="574.9" rx="6.9" ry="6.1" transform="rotate(172 505.1 574.9)" stroke-width="1.50" opacity="1.00"/><ellipse cx="514.0" cy="556.2" rx="6.8" ry="5.9" transform="rotate(175 514.0 556.2)" stroke-width="1.50" opacity="0.98"/><ellipse cx="522.7" cy="538.1" rx="6.7" ry="5.7" transform="rotate(176 522.7 538.1)" stroke-width="1.50" opacity="0.96"/><ellipse cx="531.0" cy="520.6" rx="6.6" ry="5.6" transform="rotate(178 531.0 520.6)" stroke-width="1.50" opacity="0.94"/><ellipse cx="539.2" cy="503.6" rx="6.5" ry="5.4" transform="rotate(179 539.2 503.6)" stroke-width="1.47" opacity="0.93"/><ellipse cx="547.0" cy="487.1" rx="6.4" ry="5.2" transform="rotate(180 547.0 487.1)" stroke-width="1.44" opacity="0.91"/><ellipse cx="554.7" cy="471.2" rx="6.3" ry="5.1" transform="rotate(-179 554.7 471.2)" stroke-width="1.41" opacity="0.89"/><ellipse cx="562.1" cy="455.7" rx="6.2" ry="4.9" transform="rotate(-179 562.1 455.7)" stroke-width="1.38" opacity="0.87"/><ellipse cx="569.2" cy="440.7" rx="6.1" ry="4.8" transform="rotate(-178 569.2 440.7)" stroke-width="1.35" opacity="0.86"/><ellipse cx="576.2" cy="426.1" rx="6.0" ry="4.6" transform="rotate(-178 576.2 426.1)" stroke-width="1.32" opacity="0.84"/><ellipse cx="583.0" cy="411.9" rx="5.9" ry="4.5" transform="rotate(-177 583.0 411.9)" stroke-width="1.29" opacity="0.83"/><ellipse cx="589.6" cy="398.1" rx="5.8" ry="4.4" transform="rotate(-177 589.6 398.1)" stroke-width="1.26" opacity="0.81"/><ellipse cx="596.0" cy="384.7" rx="5.7" ry="4.2" transform="rotate(-177 596.0 384.7)" stroke-width="1.23" opacity="0.80"/><ellipse cx="602.2" cy="371.7" rx="5.7" ry="4.1" transform="rotate(-177 602.2 371.7)" stroke-width="1.21" opacity="0.79"/><ellipse cx="608.3" cy="359.0" rx="5.6" ry="4.0" transform="rotate(-176 608.3 359.0)" stroke-width="1.19" opacity="0.77"/><ellipse cx="614.2" cy="346.7" rx="5.5" ry="3.9" transform="rotate(-176 614.2 346.7)" stroke-width="1.16" opacity="0.76"/><ellipse cx="619.9" cy="334.7" rx="5.5" ry="3.8" transform="rotate(-176 619.9 334.7)" stroke-width="1.14" opacity="0.75"/><ellipse cx="625.5" cy="323.0" rx="5.4" ry="3.7" transform="rotate(-176 625.5 323.0)" stroke-width="1.12" opacity="0.74"/><ellipse cx="631.0" cy="311.6" rx="5.3" ry="3.6" transform="rotate(-176 631.0 311.6)" stroke-width="1.10" opacity="0.72"/><ellipse cx="636.3" cy="300.5" rx="5.3" ry="3.5" transform="rotate(-176 636.3 300.5)" stroke-width="1.07" opacity="0.71"/><ellipse cx="641.4" cy="289.7" rx="5.2" ry="3.4" transform="rotate(-176 641.4 289.7)" stroke-width="1.05" opacity="0.70"/><ellipse cx="646.5" cy="279.1" rx="5.1" ry="3.3" transform="rotate(-176 646.5 279.1)" stroke-width="1.03" opacity="0.69"/><ellipse cx="651.4" cy="268.8" rx="5.1" ry="3.3" transform="rotate(-175 651.4 268.8)" stroke-width="1.02" opacity="0.68"/><ellipse cx="656.2" cy="258.7" rx="5.0" ry="3.2" transform="rotate(-175 656.2 258.7)" stroke-width="1.00" opacity="0.67"/><ellipse cx="660.9" cy="248.9" rx="5.0" ry="3.1" transform="rotate(-175 660.9 248.9)" stroke-width="0.98" opacity="0.66"/><ellipse cx="665.5" cy="239.3" rx="4.9" ry="3.0" transform="rotate(-175 665.5 239.3)" stroke-width="0.96" opacity="0.65"/><ellipse cx="670.0" cy="230.0" rx="4.8" ry="3.0" transform="rotate(-175 670.0 230.0)" stroke-width="0.95" opacity="0.64"/><ellipse cx="674.4" cy="220.8" rx="4.8" ry="2.9" transform="rotate(-175 674.4 220.8)" stroke-width="0.93" opacity="0.64"/><ellipse cx="678.6" cy="211.9" rx="4.7" ry="2.8" transform="rotate(-175 678.6 211.9)" stroke-width="0.91" opacity="0.63"/><ellipse cx="682.8" cy="203.1" rx="4.7" ry="2.8" transform="rotate(-175 682.8 203.1)" stroke-width="0.90" opacity="0.62"/><ellipse cx="686.9" cy="194.6" rx="4.6" ry="2.7" transform="rotate(-175 686.9 194.6)" stroke-width="0.88" opacity="0.61"/><ellipse cx="690.9" cy="186.2" rx="4.6" ry="2.6" transform="rotate(-175 690.9 186.2)" stroke-width="0.87" opacity="0.60"/><ellipse cx="526.3" cy="582.5" rx="6.9" ry="6.2" transform="rotate(176 526.3 582.5)" stroke-width="1.50" opacity="1.00"/><ellipse cx="534.9" cy="563.5" rx="6.8" ry="6.0" transform="rotate(178 534.9 563.5)" stroke-width="1.50" opacity="0.99"/><ellipse cx="543.3" cy="545.2" rx="6.7" ry="5.8" transform="rotate(179 543.3 545.2)" stroke-width="1.50" opacity="0.97"/><ellipse cx="551.4" cy="527.4" rx="6.6" ry="5.6" transform="rotate(-179 551.4 527.4)" stroke-width="1.50" opacity="0.95"/><ellipse cx="559.3" cy="510.2" rx="6.5" ry="5.5" transform="rotate(-179 559.3 510.2)" stroke-width="1.49" opacity="0.93"/><ellipse cx="566.9" cy="493.5" rx="6.4" ry="5.3" transform="rotate(-178 566.9 493.5)" stroke-width="1.45" opacity="0.92"/><ellipse cx="574.2" cy="477.4" rx="6.3" ry="5.1" transform="rotate(-177 574.2 477.4)" stroke-width="1.42" opacity="0.90"/><ellipse cx="581.4" cy="461.7" rx="6.2" ry="5.0" transform="rotate(-177 581.4 461.7)" stroke-width="1.39" opacity="0.88"/><ellipse cx="588.3" cy="446.5" rx="6.1" ry="4.8" transform="rotate(-176 588.3 446.5)" stroke-width="1.36" opacity="0.86"/><ellipse cx="595.1" cy="431.7" rx="6.0" ry="4.7" transform="rotate(-176 595.1 431.7)" stroke-width="1.33" opacity="0.85"/><ellipse cx="601.6" cy="417.4" rx="6.0" ry="4.5" transform="rotate(-176 601.6 417.4)" stroke-width="1.30" opacity="0.83"/><ellipse cx="608.0" cy="403.4" rx="5.9" ry="4.4" transform="rotate(-176 608.0 403.4)" stroke-width="1.27" opacity="0.82"/><ellipse cx="614.2" cy="389.9" rx="5.8" ry="4.3" transform="rotate(-175 614.2 389.9)" stroke-width="1.25" opacity="0.80"/><ellipse cx="620.2" cy="376.7" rx="5.7" ry="4.2" transform="rotate(-175 620.2 376.7)" stroke-width="1.22" opacity="0.79"/><ellipse cx="626.0" cy="363.9" rx="5.6" ry="4.1" transform="rotate(-175 626.0 363.9)" stroke-width="1.20" opacity="0.78"/><ellipse cx="631.7" cy="351.4" rx="5.6" ry="3.9" transform="rotate(-175 631.7 351.4)" stroke-width="1.17" opacity="0.76"/><ellipse cx="637.3" cy="339.3" rx="5.5" ry="3.8" transform="rotate(-175 637.3 339.3)" stroke-width="1.15" opacity="0.75"/><ellipse cx="642.7" cy="327.5" rx="5.4" ry="3.7" transform="rotate(-175 642.7 327.5)" stroke-width="1.13" opacity="0.74"/><ellipse cx="647.9" cy="315.9" rx="5.4" ry="3.6" transform="rotate(-175 647.9 315.9)" stroke-width="1.10" opacity="0.73"/><ellipse cx="653.1" cy="304.7" rx="5.3" ry="3.5" transform="rotate(-175 653.1 304.7)" stroke-width="1.08" opacity="0.72"/><ellipse cx="658.1" cy="293.8" rx="5.2" ry="3.5" transform="rotate(-175 658.1 293.8)" stroke-width="1.06" opacity="0.71"/><ellipse cx="662.9" cy="283.1" rx="5.2" ry="3.4" transform="rotate(-175 662.9 283.1)" stroke-width="1.04" opacity="0.70"/><ellipse cx="667.7" cy="272.7" rx="5.1" ry="3.3" transform="rotate(-175 667.7 272.7)" stroke-width="1.02" opacity="0.69"/><ellipse cx="672.3" cy="262.5" rx="5.1" ry="3.2" transform="rotate(-175 672.3 262.5)" stroke-width="1.01" opacity="0.68"/><ellipse cx="676.8" cy="252.6" rx="5.0" ry="3.1" transform="rotate(-175 676.8 252.6)" stroke-width="0.99" opacity="0.67"/><ellipse cx="681.3" cy="242.9" rx="4.9" ry="3.0" transform="rotate(-175 681.3 242.9)" stroke-width="0.97" opacity="0.66"/><ellipse cx="685.6" cy="233.5" rx="4.9" ry="3.0" transform="rotate(-175 685.6 233.5)" stroke-width="0.95" opacity="0.65"/><ellipse cx="689.8" cy="224.2" rx="4.8" ry="2.9" transform="rotate(-175 689.8 224.2)" stroke-width="0.94" opacity="0.64"/><ellipse cx="693.9" cy="215.2" rx="4.8" ry="2.8" transform="rotate(-175 693.9 215.2)" stroke-width="0.92" opacity="0.63"/><ellipse cx="697.9" cy="206.4" rx="4.7" ry="2.8" transform="rotate(-175 697.9 206.4)" stroke-width="0.91" opacity="0.62"/><ellipse cx="701.9" cy="197.8" rx="4.7" ry="2.7" transform="rotate(-175 701.9 197.8)" stroke-width="0.89" opacity="0.61"/><ellipse cx="705.7" cy="189.3" rx="4.6" ry="2.6" transform="rotate(-175 705.7 189.3)" stroke-width="0.88" opacity="0.61"/><ellipse cx="547.8" cy="590.1" rx="7.0" ry="6.3" transform="rotate(-179 547.8 590.1)" stroke-width="1.50" opacity="1.00"/><ellipse cx="556.1" cy="570.9" rx="6.9" ry="6.1" transform="rotate(-178 556.1 570.9)" stroke-width="1.50" opacity="1.00"/><ellipse cx="564.2" cy="552.3" rx="6.8" ry="5.9" transform="rotate(-177 564.2 552.3)" stroke-width="1.50" opacity="0.98"/><ellipse cx="572.0" cy="534.3" rx="6.7" ry="5.7" transform="rotate(-176 572.0 534.3)" stroke-width="1.50" opacity="0.96"/><ellipse cx="579.6" cy="516.9" rx="6.6" ry="5.5" transform="rotate(-176 579.6 516.9)" stroke-width="1.50" opacity="0.94"/><ellipse cx="587.0" cy="500.0" rx="6.5" ry="5.3" transform="rotate(-175 587.0 500.0)" stroke-width="1.47" opacity="0.92"/><ellipse cx="594.1" cy="483.6" rx="6.4" ry="5.2" transform="rotate(-175 594.1 483.6)" stroke-width="1.43" opacity="0.91"/><ellipse cx="601.0" cy="467.8" rx="6.3" ry="5.0" transform="rotate(-175 601.0 467.8)" stroke-width="1.40" opacity="0.89"/><ellipse cx="607.7" cy="452.4" rx="6.2" ry="4.9" transform="rotate(-175 607.7 452.4)" stroke-width="1.37" opacity="0.87"/><ellipse cx="614.2" cy="437.4" rx="6.1" ry="4.7" transform="rotate(-174 614.2 437.4)" stroke-width="1.34" opacity="0.86"/><ellipse cx="620.5" cy="422.9" rx="6.0" ry="4.6" transform="rotate(-174 620.5 422.9)" stroke-width="1.31" opacity="0.84"/><ellipse cx="626.6" cy="408.8" rx="5.9" ry="4.5" transform="rotate(-174 626.6 408.8)" stroke-width="1.28" opacity="0.82"/><ellipse cx="632.6" cy="395.1" rx="5.8" ry="4.3" transform="rotate(-174 632.6 395.1)" stroke-width="1.26" opacity="0.81"/><ellipse cx="638.4" cy="381.8" rx="5.8" ry="4.2" transform="rotate(-174 638.4 381.8)" stroke-width="1.23" opacity="0.80"/><ellipse cx="644.0" cy="368.8" rx="5.7" ry="4.1" transform="rotate(-174 644.0 368.8)" stroke-width="1.21" opacity="0.78"/><ellipse cx="649.5" cy="356.2" rx="5.6" ry="4.0" transform="rotate(-174 649.5 356.2)" stroke-width="1.18" opacity="0.77"/><ellipse cx="654.8" cy="343.9" rx="5.5" ry="3.9" transform="rotate(-174 654.8 343.9)" stroke-width="1.16" opacity="0.76"/><ellipse cx="660.0" cy="332.0" rx="5.5" ry="3.8" transform="rotate(-174 660.0 332.0)" stroke-width="1.14" opacity="0.75"/><ellipse cx="665.1" cy="320.3" rx="5.4" ry="3.7" transform="rotate(-174 665.1 320.3)" stroke-width="1.11" opacity="0.73"/><ellipse cx="670.0" cy="309.0" rx="5.3" ry="3.6" transform="rotate(-174 670.0 309.0)" stroke-width="1.09" opacity="0.72"/><ellipse cx="674.8" cy="297.9" rx="5.3" ry="3.5" transform="rotate(-174 674.8 297.9)" stroke-width="1.07" opacity="0.71"/><ellipse cx="679.5" cy="287.2" rx="5.2" ry="3.4" transform="rotate(-174 679.5 287.2)" stroke-width="1.05" opacity="0.70"/><ellipse cx="684.1" cy="276.6" rx="5.2" ry="3.3" transform="rotate(-174 684.1 276.6)" stroke-width="1.03" opacity="0.69"/><ellipse cx="688.6" cy="266.4" rx="5.1" ry="3.2" transform="rotate(-174 688.6 266.4)" stroke-width="1.01" opacity="0.68"/><ellipse cx="692.9" cy="256.4" rx="5.0" ry="3.1" transform="rotate(-174 692.9 256.4)" stroke-width="1.00" opacity="0.67"/><ellipse cx="697.2" cy="246.6" rx="5.0" ry="3.1" transform="rotate(-174 697.2 246.6)" stroke-width="0.98" opacity="0.66"/><ellipse cx="701.3" cy="237.0" rx="4.9" ry="3.0" transform="rotate(-174 701.3 237.0)" stroke-width="0.96" opacity="0.65"/><ellipse cx="705.4" cy="227.7" rx="4.9" ry="2.9" transform="rotate(-174 705.4 227.7)" stroke-width="0.94" opacity="0.64"/><ellipse cx="709.3" cy="218.6" rx="4.8" ry="2.9" transform="rotate(-174 709.3 218.6)" stroke-width="0.93" opacity="0.63"/><ellipse cx="713.2" cy="209.7" rx="4.8" ry="2.8" transform="rotate(-174 713.2 209.7)" stroke-width="0.91" opacity="0.63"/><ellipse cx="717.0" cy="201.0" rx="4.7" ry="2.7" transform="rotate(-174 717.0 201.0)" stroke-width="0.90" opacity="0.62"/><ellipse cx="720.7" cy="192.5" rx="4.7" ry="2.7" transform="rotate(-174 720.7 192.5)" stroke-width="0.88" opacity="0.61"/><ellipse cx="569.6" cy="597.9" rx="7.0" ry="6.4" transform="rotate(-174 569.6 597.9)" stroke-width="1.50" opacity="1.00"/><ellipse cx="577.6" cy="578.4" rx="6.9" ry="6.2" transform="rotate(-174 577.6 578.4)" stroke-width="1.50" opacity="1.00"/><ellipse cx="585.4" cy="559.6" rx="6.8" ry="6.0" transform="rotate(-173 585.4 559.6)" stroke-width="1.50" opacity="0.99"/><ellipse cx="593.0" cy="541.3" rx="6.7" ry="5.8" transform="rotate(-173 593.0 541.3)" stroke-width="1.50" opacity="0.97"/><ellipse cx="600.3" cy="523.7" rx="6.6" ry="5.6" transform="rotate(-173 600.3 523.7)" stroke-width="1.50" opacity="0.95"/><ellipse cx="607.3" cy="506.6" rx="6.5" ry="5.4" transform="rotate(-173 607.3 506.6)" stroke-width="1.48" opacity="0.93"/><ellipse cx="614.2" cy="490.0" rx="6.4" ry="5.2" transform="rotate(-173 614.2 490.0)" stroke-width="1.45" opacity="0.91"/><ellipse cx="620.8" cy="473.9" rx="6.3" ry="5.1" transform="rotate(-173 620.8 473.9)" stroke-width="1.42" opacity="0.90"/><ellipse cx="627.3" cy="458.3" rx="6.2" ry="4.9" transform="rotate(-173 627.3 458.3)" stroke-width="1.38" opacity="0.88"/><ellipse cx="633.5" cy="443.2" rx="6.1" ry="4.8" transform="rotate(-173 633.5 443.2)" stroke-width="1.35" opacity="0.86"/><ellipse cx="639.6" cy="428.5" rx="6.1" ry="4.6" transform="rotate(-173 639.6 428.5)" stroke-width="1.32" opacity="0.85"/><ellipse cx="645.5" cy="414.2" rx="6.0" ry="4.5" transform="rotate(-173 645.5 414.2)" stroke-width="1.30" opacity="0.83"/><ellipse cx="651.2" cy="400.4" rx="5.9" ry="4.4" transform="rotate(-173 651.2 400.4)" stroke-width="1.27" opacity="0.82"/><ellipse cx="656.8" cy="386.9" rx="5.8" ry="4.2" transform="rotate(-173 656.8 386.9)" stroke-width="1.24" opacity="0.80"/><ellipse cx="662.2" cy="373.8" rx="5.7" ry="4.1" transform="rotate(-173 662.2 373.8)" stroke-width="1.22" opacity="0.79"/><ellipse cx="667.5" cy="361.0" rx="5.7" ry="4.0" transform="rotate(-173 667.5 361.0)" stroke-width="1.19" opacity="0.78"/><ellipse cx="672.6" cy="348.6" rx="5.6" ry="3.9" transform="rotate(-173 672.6 348.6)" stroke-width="1.17" opacity="0.76"/><ellipse cx="677.6" cy="336.5" rx="5.5" ry="3.8" transform="rotate(-173 677.6 336.5)" stroke-width="1.15" opacity="0.75"/><ellipse cx="682.5" cy="324.8" rx="5.5" ry="3.7" transform="rotate(-173 682.5 324.8)" stroke-width="1.12" opacity="0.74"/><ellipse cx="687.2" cy="313.3" rx="5.4" ry="3.6" transform="rotate(-173 687.2 313.3)" stroke-width="1.10" opacity="0.73"/><ellipse cx="691.8" cy="302.1" rx="5.3" ry="3.5" transform="rotate(-173 691.8 302.1)" stroke-width="1.08" opacity="0.72"/><ellipse cx="696.3" cy="291.2" rx="5.3" ry="3.4" transform="rotate(-173 696.3 291.2)" stroke-width="1.06" opacity="0.71"/><ellipse cx="700.7" cy="280.6" rx="5.2" ry="3.3" transform="rotate(-173 700.7 280.6)" stroke-width="1.04" opacity="0.69"/><ellipse cx="705.0" cy="270.3" rx="5.1" ry="3.3" transform="rotate(-173 705.0 270.3)" stroke-width="1.02" opacity="0.68"/><ellipse cx="709.2" cy="260.2" rx="5.1" ry="3.2" transform="rotate(-173 709.2 260.2)" stroke-width="1.00" opacity="0.67"/><ellipse cx="713.2" cy="250.3" rx="5.0" ry="3.1" transform="rotate(-173 713.2 250.3)" stroke-width="0.99" opacity="0.67"/><ellipse cx="717.2" cy="240.6" rx="5.0" ry="3.0" transform="rotate(-173 717.2 240.6)" stroke-width="0.97" opacity="0.66"/><ellipse cx="721.1" cy="231.2" rx="4.9" ry="2.9" transform="rotate(-173 721.1 231.2)" stroke-width="0.95" opacity="0.65"/><ellipse cx="724.9" cy="222.0" rx="4.9" ry="2.9" transform="rotate(-173 724.9 222.0)" stroke-width="0.93" opacity="0.64"/><ellipse cx="728.6" cy="213.0" rx="4.8" ry="2.8" transform="rotate(-173 728.6 213.0)" stroke-width="0.92" opacity="0.63"/><ellipse cx="732.3" cy="204.3" rx="4.7" ry="2.7" transform="rotate(-173 732.3 204.3)" stroke-width="0.90" opacity="0.62"/><ellipse cx="735.8" cy="195.7" rx="4.7" ry="2.7" transform="rotate(-173 735.8 195.7)" stroke-width="0.89" opacity="0.61"/><ellipse cx="591.7" cy="605.8" rx="7.1" ry="6.5" transform="rotate(-169 591.7 605.8)" stroke-width="1.50" opacity="1.00"/><ellipse cx="599.5" cy="586.0" rx="7.0" ry="6.2" transform="rotate(-169 599.5 586.0)" stroke-width="1.50" opacity="1.00"/><ellipse cx="607.0" cy="566.9" rx="6.9" ry="6.0" transform="rotate(-170 607.0 566.9)" stroke-width="1.50" opacity="1.00"/><ellipse cx="614.2" cy="548.4" rx="6.8" ry="5.8" transform="rotate(-170 614.2 548.4)" stroke-width="1.50" opacity="0.98"/><ellipse cx="621.2" cy="530.5" rx="6.7" ry="5.6" transform="rotate(-170 621.2 530.5)" stroke-width="1.50" opacity="0.96"/><ellipse cx="628.0" cy="513.2" rx="6.6" ry="5.5" transform="rotate(-170 628.0 513.2)" stroke-width="1.50" opacity="0.94"/><ellipse cx="634.6" cy="496.4" rx="6.5" ry="5.3" transform="rotate(-170 634.6 496.4)" stroke-width="1.46" opacity="0.92"/><ellipse cx="640.9" cy="480.1" rx="6.4" ry="5.1" transform="rotate(-171 640.9 480.1)" stroke-width="1.43" opacity="0.90"/><ellipse cx="647.1" cy="464.4" rx="6.3" ry="5.0" transform="rotate(-171 647.1 464.4)" stroke-width="1.40" opacity="0.89"/><ellipse cx="653.1" cy="449.0" rx="6.2" ry="4.8" transform="rotate(-171 653.1 449.0)" stroke-width="1.37" opacity="0.87"/><ellipse cx="658.9" cy="434.2" rx="6.1" ry="4.7" transform="rotate(-171 658.9 434.2)" stroke-width="1.34" opacity="0.85"/><ellipse cx="664.6" cy="419.7" rx="6.0" ry="4.5" transform="rotate(-171 664.6 419.7)" stroke-width="1.31" opacity="0.84"/><ellipse cx="670.1" cy="405.7" rx="6.0" ry="4.4" transform="rotate(-171 670.1 405.7)" stroke-width="1.28" opacity="0.82"/><ellipse cx="675.4" cy="392.1" rx="5.9" ry="4.3" transform="rotate(-171 675.4 392.1)" stroke-width="1.25" opacity="0.81"/><ellipse cx="680.6" cy="378.8" rx="5.8" ry="4.2" transform="rotate(-171 680.6 378.8)" stroke-width="1.23" opacity="0.79"/><ellipse cx="685.7" cy="365.9" rx="5.7" ry="4.0" transform="rotate(-171 685.7 365.9)" stroke-width="1.20" opacity="0.78"/><ellipse cx="690.6" cy="353.4" rx="5.6" ry="3.9" transform="rotate(-172 690.6 353.4)" stroke-width="1.18" opacity="0.77"/><ellipse cx="695.3" cy="341.2" rx="5.6" ry="3.8" transform="rotate(-172 695.3 341.2)" stroke-width="1.15" opacity="0.76"/><ellipse cx="700.0" cy="329.3" rx="5.5" ry="3.7" transform="rotate(-172 700.0 329.3)" stroke-width="1.13" opacity="0.74"/><ellipse cx="704.5" cy="317.7" rx="5.4" ry="3.6" transform="rotate(-172 704.5 317.7)" stroke-width="1.11" opacity="0.73"/><ellipse cx="709.0" cy="306.4" rx="5.4" ry="3.5" transform="rotate(-172 709.0 306.4)" stroke-width="1.09" opacity="0.72"/><ellipse cx="713.3" cy="295.4" rx="5.3" ry="3.4" transform="rotate(-172 713.3 295.4)" stroke-width="1.07" opacity="0.71"/><ellipse cx="717.5" cy="284.7" rx="5.2" ry="3.4" transform="rotate(-172 717.5 284.7)" stroke-width="1.05" opacity="0.70"/><ellipse cx="721.6" cy="274.2" rx="5.2" ry="3.3" transform="rotate(-172 721.6 274.2)" stroke-width="1.03" opacity="0.69"/><ellipse cx="725.6" cy="264.0" rx="5.1" ry="3.2" transform="rotate(-172 725.6 264.0)" stroke-width="1.01" opacity="0.68"/><ellipse cx="729.5" cy="254.0" rx="5.1" ry="3.1" transform="rotate(-172 729.5 254.0)" stroke-width="0.99" opacity="0.67"/><ellipse cx="733.3" cy="244.3" rx="5.0" ry="3.0" transform="rotate(-172 733.3 244.3)" stroke-width="0.98" opacity="0.66"/><ellipse cx="737.0" cy="234.8" rx="4.9" ry="3.0" transform="rotate(-173 737.0 234.8)" stroke-width="0.96" opacity="0.65"/><ellipse cx="740.6" cy="225.5" rx="4.9" ry="2.9" transform="rotate(-173 740.6 225.5)" stroke-width="0.94" opacity="0.64"/><ellipse cx="744.2" cy="216.4" rx="4.8" ry="2.8" transform="rotate(-173 744.2 216.4)" stroke-width="0.93" opacity="0.63"/><ellipse cx="747.7" cy="207.6" rx="4.8" ry="2.8" transform="rotate(-173 747.7 207.6)" stroke-width="0.91" opacity="0.63"/><ellipse cx="751.1" cy="198.9" rx="4.7" ry="2.7" transform="rotate(-173 751.1 198.9)" stroke-width="0.89" opacity="0.62"/><ellipse cx="614.2" cy="613.8" rx="7.2" ry="6.5" transform="rotate(-163 614.2 613.8)" stroke-width="1.50" opacity="1.00"/><ellipse cx="621.6" cy="593.7" rx="7.1" ry="6.3" transform="rotate(-165 621.6 593.7)" stroke-width="1.50" opacity="1.00"/><ellipse cx="628.8" cy="574.4" rx="7.0" ry="6.1" transform="rotate(-166 628.8 574.4)" stroke-width="1.50" opacity="1.00"/><ellipse cx="635.7" cy="555.6" rx="6.9" ry="5.9" transform="rotate(-166 635.7 555.6)" stroke-width="1.50" opacity="0.99"/><ellipse cx="642.4" cy="537.5" rx="6.8" ry="5.7" transform="rotate(-167 642.4 537.5)" stroke-width="1.50" opacity="0.97"/><ellipse cx="648.9" cy="519.9" rx="6.7" ry="5.5" transform="rotate(-168 648.9 519.9)" stroke-width="1.50" opacity="0.95"/><ellipse cx="655.2" cy="502.9" rx="6.6" ry="5.3" transform="rotate(-168 655.2 502.9)" stroke-width="1.48" opacity="0.93"/><ellipse cx="661.3" cy="486.4" rx="6.5" ry="5.2" transform="rotate(-168 661.3 486.4)" stroke-width="1.44" opacity="0.91"/><ellipse cx="667.2" cy="470.5" rx="6.4" ry="5.0" transform="rotate(-169 667.2 470.5)" stroke-width="1.41" opacity="0.89"/><ellipse cx="672.9" cy="455.0" rx="6.3" ry="4.9" transform="rotate(-169 672.9 455.0)" stroke-width="1.38" opacity="0.88"/><ellipse cx="678.5" cy="439.9" rx="6.2" ry="4.7" transform="rotate(-169 678.5 439.9)" stroke-width="1.35" opacity="0.86"/><ellipse cx="683.9" cy="425.3" rx="6.1" ry="4.6" transform="rotate(-169 683.9 425.3)" stroke-width="1.32" opacity="0.84"/><ellipse cx="689.2" cy="411.1" rx="6.0" ry="4.4" transform="rotate(-170 689.2 411.1)" stroke-width="1.29" opacity="0.83"/><ellipse cx="694.3" cy="397.3" rx="5.9" ry="4.3" transform="rotate(-170 694.3 397.3)" stroke-width="1.26" opacity="0.81"/><ellipse cx="699.2" cy="383.9" rx="5.9" ry="4.2" transform="rotate(-170 699.2 383.9)" stroke-width="1.24" opacity="0.80"/><ellipse cx="704.0" cy="370.9" rx="5.8" ry="4.1" transform="rotate(-170 704.0 370.9)" stroke-width="1.21" opacity="0.79"/><ellipse cx="708.7" cy="358.2" rx="5.7" ry="4.0" transform="rotate(-170 708.7 358.2)" stroke-width="1.19" opacity="0.77"/><ellipse cx="713.3" cy="345.8" rx="5.6" ry="3.9" transform="rotate(-171 713.3 345.8)" stroke-width="1.16" opacity="0.76"/><ellipse cx="717.8" cy="333.8" rx="5.6" ry="3.8" transform="rotate(-171 717.8 333.8)" stroke-width="1.14" opacity="0.75"/><ellipse cx="722.1" cy="322.1" rx="5.5" ry="3.7" transform="rotate(-171 722.1 322.1)" stroke-width="1.12" opacity="0.74"/><ellipse cx="726.3" cy="310.7" rx="5.4" ry="3.6" transform="rotate(-171 726.3 310.7)" stroke-width="1.10" opacity="0.73"/><ellipse cx="730.4" cy="299.6" rx="5.4" ry="3.5" transform="rotate(-171 730.4 299.6)" stroke-width="1.08" opacity="0.71"/><ellipse cx="734.4" cy="288.7" rx="5.3" ry="3.4" transform="rotate(-171 734.4 288.7)" stroke-width="1.06" opacity="0.70"/><ellipse cx="738.3" cy="278.2" rx="5.2" ry="3.3" transform="rotate(-171 738.3 278.2)" stroke-width="1.04" opacity="0.69"/><ellipse cx="742.2" cy="267.8" rx="5.2" ry="3.2" transform="rotate(-172 742.2 267.8)" stroke-width="1.02" opacity="0.68"/><ellipse cx="745.9" cy="257.8" rx="5.1" ry="3.1" transform="rotate(-172 745.9 257.8)" stroke-width="1.00" opacity="0.67"/><ellipse cx="749.5" cy="248.0" rx="5.0" ry="3.1" transform="rotate(-172 749.5 248.0)" stroke-width="0.98" opacity="0.66"/><ellipse cx="753.1" cy="238.4" rx="5.0" ry="3.0" transform="rotate(-172 753.1 238.4)" stroke-width="0.97" opacity="0.65"/><ellipse cx="756.5" cy="229.0" rx="4.9" ry="2.9" transform="rotate(-172 756.5 229.0)" stroke-width="0.95" opacity="0.65"/><ellipse cx="759.9" cy="219.8" rx="4.9" ry="2.9" transform="rotate(-172 759.9 219.8)" stroke-width="0.93" opacity="0.64"/><ellipse cx="763.2" cy="210.9" rx="4.8" ry="2.8" transform="rotate(-172 763.2 210.9)" stroke-width="0.92" opacity="0.63"/><ellipse cx="766.5" cy="202.1" rx="4.8" ry="2.7" transform="rotate(-172 766.5 202.1)" stroke-width="0.90" opacity="0.62"/><ellipse cx="637.0" cy="621.9" rx="7.3" ry="6.6" transform="rotate(-159 637.0 621.9)" stroke-width="1.50" opacity="1.00"/><ellipse cx="644.1" cy="601.6" rx="7.2" ry="6.3" transform="rotate(-161 644.1 601.6)" stroke-width="1.50" opacity="1.00"/><ellipse cx="650.9" cy="581.9" rx="7.1" ry="6.1" transform="rotate(-162 650.9 581.9)" stroke-width="1.50" opacity="1.00"/><ellipse cx="657.5" cy="562.9" rx="7.0" ry="5.9" transform="rotate(-163 657.5 562.9)" stroke-width="1.50" opacity="1.00"/><ellipse cx="663.9" cy="544.6" rx="6.8" ry="5.7" transform="rotate(-164 663.9 544.6)" stroke-width="1.50" opacity="0.98"/><ellipse cx="670.1" cy="526.8" rx="6.7" ry="5.6" transform="rotate(-165 670.1 526.8)" stroke-width="1.50" opacity="0.96"/><ellipse cx="676.1" cy="509.5" rx="6.6" ry="5.4" transform="rotate(-166 676.1 509.5)" stroke-width="1.49" opacity="0.94"/><ellipse cx="681.9" cy="492.8" rx="6.5" ry="5.2" transform="rotate(-166 681.9 492.8)" stroke-width="1.46" opacity="0.92"/><ellipse cx="687.6" cy="476.7" rx="6.4" ry="5.1" transform="rotate(-167 687.6 476.7)" stroke-width="1.43" opacity="0.90"/><ellipse cx="693.0" cy="461.0" rx="6.3" ry="4.9" transform="rotate(-167 693.0 461.0)" stroke-width="1.39" opacity="0.88"/><ellipse cx="698.3" cy="445.7" rx="6.3" ry="4.8" transform="rotate(-168 698.3 445.7)" stroke-width="1.36" opacity="0.87"/><ellipse cx="703.5" cy="430.9" rx="6.2" ry="4.6" transform="rotate(-168 703.5 430.9)" stroke-width="1.33" opacity="0.85"/><ellipse cx="708.5" cy="416.6" rx="6.1" ry="4.5" transform="rotate(-168 708.5 416.6)" stroke-width="1.30" opacity="0.84"/><ellipse cx="713.4" cy="402.6" rx="6.0" ry="4.4" transform="rotate(-169 713.4 402.6)" stroke-width="1.28" opacity="0.82"/><ellipse cx="718.1" cy="389.1" rx="5.9" ry="4.2" transform="rotate(-169 718.1 389.1)" stroke-width="1.25" opacity="0.81"/><ellipse cx="722.7" cy="375.9" rx="5.8" ry="4.1" transform="rotate(-169 722.7 375.9)" stroke-width="1.22" opacity="0.79"/><ellipse cx="727.1" cy="363.0" rx="5.8" ry="4.0" transform="rotate(-169 727.1 363.0)" stroke-width="1.20" opacity="0.78"/><ellipse cx="731.5" cy="350.6" rx="5.7" ry="3.9" transform="rotate(-170 731.5 350.6)" stroke-width="1.17" opacity="0.77"/><ellipse cx="735.7" cy="338.4" rx="5.6" ry="3.8" transform="rotate(-170 735.7 338.4)" stroke-width="1.15" opacity="0.75"/><ellipse cx="739.8" cy="326.6" rx="5.5" ry="3.7" transform="rotate(-170 739.8 326.6)" stroke-width="1.13" opacity="0.74"/><ellipse cx="743.8" cy="315.0" rx="5.5" ry="3.6" transform="rotate(-170 743.8 315.0)" stroke-width="1.11" opacity="0.73"/><ellipse cx="747.8" cy="303.8" rx="5.4" ry="3.5" transform="rotate(-170 747.8 303.8)" stroke-width="1.09" opacity="0.72"/><ellipse cx="751.6" cy="292.8" rx="5.3" ry="3.4" transform="rotate(-170 751.6 292.8)" stroke-width="1.07" opacity="0.71"/><ellipse cx="755.3" cy="282.2" rx="5.3" ry="3.3" transform="rotate(-171 755.3 282.2)" stroke-width="1.05" opacity="0.70"/><ellipse cx="758.9" cy="271.8" rx="5.2" ry="3.2" transform="rotate(-171 758.9 271.8)" stroke-width="1.03" opacity="0.69"/><ellipse cx="762.5" cy="261.6" rx="5.1" ry="3.2" transform="rotate(-171 762.5 261.6)" stroke-width="1.01" opacity="0.68"/><ellipse cx="765.9" cy="251.7" rx="5.1" ry="3.1" transform="rotate(-171 765.9 251.7)" stroke-width="0.99" opacity="0.67"/><ellipse cx="769.3" cy="242.0" rx="5.0" ry="3.0" transform="rotate(-171 769.3 242.0)" stroke-width="0.97" opacity="0.66"/><ellipse cx="772.6" cy="232.5" rx="5.0" ry="2.9" transform="rotate(-171 772.6 232.5)" stroke-width="0.96" opacity="0.65"/><ellipse cx="775.8" cy="223.3" rx="4.9" ry="2.9" transform="rotate(-171 775.8 223.3)" stroke-width="0.94" opacity="0.64"/><ellipse cx="778.9" cy="214.2" rx="4.9" ry="2.8" transform="rotate(-172 778.9 214.2)" stroke-width="0.92" opacity="0.63"/><ellipse cx="782.0" cy="205.4" rx="4.8" ry="2.7" transform="rotate(-172 782.0 205.4)" stroke-width="0.91" opacity="0.62"/><ellipse cx="660.2" cy="630.2" rx="7.4" ry="6.6" transform="rotate(-155 660.2 630.2)" stroke-width="1.50" opacity="1.00"/><ellipse cx="666.9" cy="609.5" rx="7.3" ry="6.4" transform="rotate(-157 666.9 609.5)" stroke-width="1.50" opacity="1.00"/><ellipse cx="673.4" cy="589.6" rx="7.2" ry="6.2" transform="rotate(-159 673.4 589.6)" stroke-width="1.50" opacity="1.00"/><ellipse cx="679.7" cy="570.4" rx="7.1" ry="6.0" transform="rotate(-160 679.7 570.4)" stroke-width="1.50" opacity="1.00"/><ellipse cx="685.8" cy="551.7" rx="6.9" ry="5.8" transform="rotate(-162 685.8 551.7)" stroke-width="1.50" opacity="0.98"/><ellipse cx="691.6" cy="533.7" rx="6.8" ry="5.6" transform="rotate(-163 691.6 533.7)" stroke-width="1.50" opacity="0.96"/><ellipse cx="697.3" cy="516.2" rx="6.7" ry="5.4" transform="rotate(-164 697.3 516.2)" stroke-width="1.50" opacity="0.94"/><ellipse cx="702.9" cy="499.3" rx="6.6" ry="5.3" transform="rotate(-164 702.9 499.3)" stroke-width="1.47" opacity="0.93"/><ellipse cx="708.2" cy="482.9" rx="6.5" ry="5.1" transform="rotate(-165 708.2 482.9)" stroke-width="1.44" opacity="0.91"/><ellipse cx="713.4" cy="467.0" rx="6.4" ry="4.9" transform="rotate(-165 713.4 467.0)" stroke-width="1.41" opacity="0.89"/><ellipse cx="718.4" cy="451.6" rx="6.3" ry="4.8" transform="rotate(-166 718.4 451.6)" stroke-width="1.38" opacity="0.87"/><ellipse cx="723.3" cy="436.6" rx="6.2" ry="4.6" transform="rotate(-166 723.3 436.6)" stroke-width="1.35" opacity="0.86"/><ellipse cx="728.1" cy="422.1" rx="6.1" ry="4.5" transform="rotate(-167 728.1 422.1)" stroke-width="1.32" opacity="0.84"/><ellipse cx="732.7" cy="408.0" rx="6.1" ry="4.4" transform="rotate(-167 732.7 408.0)" stroke-width="1.29" opacity="0.83"/><ellipse cx="737.1" cy="394.3" rx="6.0" ry="4.3" transform="rotate(-168 737.1 394.3)" stroke-width="1.26" opacity="0.81"/><ellipse cx="741.5" cy="380.9" rx="5.9" ry="4.1" transform="rotate(-168 741.5 380.9)" stroke-width="1.23" opacity="0.80"/><ellipse cx="745.7" cy="368.0" rx="5.8" ry="4.0" transform="rotate(-168 745.7 368.0)" stroke-width="1.21" opacity="0.79"/><ellipse cx="749.9" cy="355.3" rx="5.7" ry="3.9" transform="rotate(-168 749.9 355.3)" stroke-width="1.19" opacity="0.77"/><ellipse cx="753.9" cy="343.0" rx="5.7" ry="3.8" transform="rotate(-169 753.9 343.0)" stroke-width="1.16" opacity="0.76"/><ellipse cx="757.8" cy="331.1" rx="5.6" ry="3.7" transform="rotate(-169 757.8 331.1)" stroke-width="1.14" opacity="0.75"/><ellipse cx="761.6" cy="319.4" rx="5.5" ry="3.6" transform="rotate(-169 761.6 319.4)" stroke-width="1.12" opacity="0.74"/><ellipse cx="765.3" cy="308.1" rx="5.5" ry="3.5" transform="rotate(-169 765.3 308.1)" stroke-width="1.10" opacity="0.72"/><ellipse cx="768.9" cy="297.0" rx="5.4" ry="3.4" transform="rotate(-170 768.9 297.0)" stroke-width="1.07" opacity="0.71"/><ellipse cx="772.4" cy="286.2" rx="5.3" ry="3.3" transform="rotate(-170 772.4 286.2)" stroke-width="1.05" opacity="0.70"/><ellipse cx="775.8" cy="275.7" rx="5.3" ry="3.3" transform="rotate(-170 775.8 275.7)" stroke-width="1.03" opacity="0.69"/><ellipse cx="779.2" cy="265.4" rx="5.2" ry="3.2" transform="rotate(-170 779.2 265.4)" stroke-width="1.02" opacity="0.68"/><ellipse cx="782.5" cy="255.4" rx="5.1" ry="3.1" transform="rotate(-170 782.5 255.4)" stroke-width="1.00" opacity="0.67"/><ellipse cx="785.7" cy="245.6" rx="5.1" ry="3.0" transform="rotate(-170 785.7 245.6)" stroke-width="0.98" opacity="0.66"/><ellipse cx="788.8" cy="236.1" rx="5.0" ry="3.0" transform="rotate(-171 788.8 236.1)" stroke-width="0.96" opacity="0.65"/><ellipse cx="791.8" cy="226.8" rx="5.0" ry="2.9" transform="rotate(-171 791.8 226.8)" stroke-width="0.95" opacity="0.64"/><ellipse cx="794.8" cy="217.6" rx="4.9" ry="2.8" transform="rotate(-171 794.8 217.6)" stroke-width="0.93" opacity="0.64"/><ellipse cx="797.7" cy="208.7" rx="4.9" ry="2.8" transform="rotate(-171 797.7 208.7)" stroke-width="0.91" opacity="0.63"/></g>
<g transform="translate(-202 -86)">
<polygon points="759.0,143.0 763.0,132.4 782.0,136.4 784.0,140.0 778.0,144.0" fill="#f4de22"/>
<polygon points="704.0,115.0 707.0,105.0 711.0,102.0 959.0,147.0 963.0,151.0 963.0,159.0 960.0,167.0 952.0,170.0 940.0,167.0 939.0,178.0 933.0,181.0 887.0,169.0 888.0,157.0 784.0,140.0 762.0,130.0 760.0,143.0 750.0,147.0 716.0,137.0 716.0,123.0 710.0,122.0" fill="#e31f1f"/>
<polygon points="704.0,115.0 707.0,105.0 711.0,102.0 959.0,147.0 963.0,151.0 963.0,158.0 957.0,160.0 720.0,117.4 710.0,120.4" fill="#ee2c2c"/>
<ellipse cx="775.0" cy="133.0" rx="4.8" ry="3.0" fill="#c11518" transform="rotate(10 775.0 133.0)"/>
<ellipse cx="792.0" cy="136.4" rx="4.8" ry="3.0" fill="#c11518" transform="rotate(10 792.0 136.4)"/>
<ellipse cx="808.0" cy="139.4" rx="4.8" ry="3.0" fill="#c11518" transform="rotate(10 808.0 139.4)"/>
<ellipse cx="826.0" cy="142.4" rx="4.8" ry="3.0" fill="#c11518" transform="rotate(10 826.0 142.4)"/>
<ellipse cx="843.0" cy="145.6" rx="4.8" ry="3.0" fill="#c11518" transform="rotate(10 843.0 145.6)"/>
<ellipse cx="860.0" cy="148.4" rx="4.8" ry="3.0" fill="#c11518" transform="rotate(10 860.0 148.4)"/>
<ellipse cx="876.0" cy="151.0" rx="4.8" ry="3.0" fill="#c11518" transform="rotate(10 876.0 151.0)"/>
<ellipse cx="711.0" cy="120.0" rx="4.4" ry="2.6" fill="#c11518" transform="rotate(10 711.0 120.0)"/>
<ellipse cx="952.0" cy="165.0" rx="4.4" ry="2.6" fill="#c11518" transform="rotate(10 952.0 165.0)"/>
<polygon points="709.0,143.0 714.0,138.0 756.0,146.0 759.6,150.0 756.0,159.0 741.0,162.4 738.0,158.0 712.0,152.0" fill="#f1f1f1"/>
<ellipse cx="717.0" cy="145.0" rx="6.4" ry="5.4" fill="#c2c2c2"/>
<ellipse cx="717.4" cy="146.0" rx="3.8" ry="3.0" fill="#6a6a6a"/>
<ellipse cx="750.0" cy="151.0" rx="6.4" ry="5.4" fill="#c2c2c2"/>
<ellipse cx="750.4" cy="152.0" rx="3.8" ry="3.0" fill="#6a6a6a"/>
<ellipse cx="733.0" cy="159.0" rx="3.6" ry="2.0" fill="#2a6fc4"/>
<polygon points="701.0,192.0 720.0,167.0 740.0,168.0 733.0,186.0 733.0,210.0 716.0,208.0 702.0,201.0" fill="#f1f1f1"/>
<polygon points="723.0,190.0 733.0,186.0 733.0,204.0 726.0,202.0" fill="#cfcfcf"/>
<polygon points="830.0,176.0 844.0,157.0 856.0,154.0 860.0,158.0 852.0,190.0 828.0,189.0" fill="#f4de22"/>
<ellipse cx="853.0" cy="160.0" rx="4.4" ry="2.4" fill="#dcc21a" transform="rotate(-10 853.0 160.0)"/>
<ellipse cx="849.0" cy="168.4" rx="4.4" ry="2.4" fill="#dcc21a" transform="rotate(-10 849.0 168.4)"/>
<ellipse cx="845.0" cy="177.0" rx="4.4" ry="2.4" fill="#dcc21a" transform="rotate(-10 845.0 177.0)"/>
<ellipse cx="841.0" cy="185.0" rx="4.4" ry="2.4" fill="#dcc21a" transform="rotate(-10 841.0 185.0)"/>
<polygon points="850.0,202.0 866.0,152.0 886.0,154.0 887.0,158.0 872.0,194.0 867.0,230.0 848.0,230.0 849.0,210.0" fill="#f4de22"/>
<polygon points="880.0,174.0 887.0,169.0 933.0,181.0 935.0,190.0 930.0,198.0 894.0,190.0 890.0,218.0 882.0,226.0 870.0,223.0 867.0,214.0 872.0,194.0" fill="#f1f1f1"/>
<ellipse cx="888.0" cy="178.0" rx="7.6" ry="6.4" fill="#c2c2c2"/>
<ellipse cx="888.4" cy="179.2" rx="4.4" ry="3.6" fill="#6a6a6a"/>
<ellipse cx="923.0" cy="185.0" rx="7.2" ry="6.0" fill="#c2c2c2"/>
<ellipse cx="923.4" cy="186.2" rx="4.2" ry="3.4" fill="#6a6a6a"/>
<ellipse cx="877.0" cy="211.0" rx="7.6" ry="6.4" fill="#c2c2c2"/>
<ellipse cx="877.4" cy="212.2" rx="4.4" ry="3.6" fill="#6a6a6a"/>
<ellipse cx="903.0" cy="193.4" rx="4.8" ry="2.0" fill="#2a6fc4" transform="rotate(10 903.0 193.4)"/>
<polygon points="791.0,215.0 820.0,175.0 830.0,178.0 828.0,190.0 852.0,191.0 850.0,202.0 836.0,230.0 818.0,228.0 794.0,230.0 770.0,228.0 770.0,215.0 788.0,216.0" fill="#f1f1f1"/>
<ellipse cx="824.0" cy="186.4" rx="6.4" ry="4.4" fill="#8d979f"/>
<ellipse cx="823.6" cy="187.6" rx="4.4" ry="2.8" fill="#3c4650"/>
<ellipse cx="810.0" cy="207.4" rx="7.2" ry="4.8" fill="#8d979f"/>
<ellipse cx="809.6" cy="208.4" rx="4.8" ry="3.0" fill="#3c4650"/>
<polygon points="733.0,186.0 765.0,141.0 769.0,140.0 820.0,149.0 821.0,153.0 820.0,174.0 791.0,215.0 788.0,216.0 770.0,215.0 769.0,228.0 750.0,226.0 749.0,210.0 734.0,205.0" fill="#c11518"/>
<polygon points="733.0,186.0 765.0,141.0 769.0,140.0 820.0,149.0 821.0,153.0 790.0,199.0 788.0,200.0 735.0,189.0" fill="#e31f1f"/>
<polygon points="739.0,184.0 767.0,143.6 817.6,151.6 789.0,195.0" fill="#26883a"/>
<ellipse cx="745.6" cy="181.0" rx="5.2" ry="4.4" fill="#f4f4f4"/>
<ellipse cx="782.4" cy="188.4" rx="5.2" ry="4.4" fill="#f4f4f4"/>
<polygon points="775.0,148.0 779.0,144.0 802.0,148.0 799.0,153.0" fill="#1c2a30"/>
<polygon points="762.0,175.0 767.0,171.0 778.0,174.0 773.0,181.0 763.0,180.0" fill="#1c2a30"/>
<ellipse cx="770.0" cy="175.6" rx="3.2" ry="2.2" fill="#f0f0f0"/>
<polyline points="784.0,142.4 781.0,147.6" fill="none" stroke="#f4f4f4" stroke-width="1.4"/>
<polyline points="778.0,151.0 775.6,156.4" fill="none" stroke="#f4f4f4" stroke-width="1.4"/>
<polyline points="790.0,143.4 787.0,148.6" fill="none" stroke="#f4f4f4" stroke-width="1.4"/>
<polyline points="784.0,152.0 781.6,157.4" fill="none" stroke="#f4f4f4" stroke-width="1.4"/>
<polyline points="796.0,144.4 793.0,149.6" fill="none" stroke="#f4f4f4" stroke-width="1.4"/>
<polyline points="790.0,153.0 787.6,158.4" fill="none" stroke="#f4f4f4" stroke-width="1.4"/>
<polyline points="802.0,145.4 799.0,150.6" fill="none" stroke="#f4f4f4" stroke-width="1.4"/>
<polyline points="796.0,154.0 793.6,159.4" fill="none" stroke="#f4f4f4" stroke-width="1.4"/>
<polygon points="884.7,324.7 889.7,305.6 900.9,288.5 909.4,285.7 922.8,287.6 936.1,291.4 944.6,297.1 948.4,305.6 947.9,317.1 943.7,336.1 936.1,358.9 930.4,376.0 925.6,384.6 919.0,388.9 911.4,387.0 898.0,381.7 888.5,377.9 884.7,355.1" fill="#323e48"/>
<polygon points="900.9,288.5 909.4,285.7 922.8,287.6 931.3,290.4 926.6,317.1 920.9,345.6 915.2,374.1 911.4,387.0 898.0,381.7 888.5,377.9 883.8,355.1 884.7,324.7 889.7,305.6" fill="#46555f"/>
<polygon points="905.6,288.5 917.1,287.6 915.2,317.1 909.4,345.6 903.7,381.7 896.1,379.8 898.0,336.1" fill="#52626d"/>
<polygon points="938.9,315.2 941.4,313.3 940.8,326.6 935.1,349.4 929.4,366.5 927.5,367.5 933.2,345.6 938.0,326.6" fill="#d8d8d0"/>
<polygon points="860.0,288.5 879.0,296.1 888.5,300.9 889.5,339.9 860.0,339.9" fill="#d3171a"/>
<polygon points="710.0,286.0 860.0,304.0 890.0,338.0 890.0,347.0 690.0,347.0 698.0,320.0" fill="#d51518"/>
<polygon points="640.0,300.0 684.0,280.0 712.0,288.0 700.0,324.0 690.0,347.0 640.0,347.0" fill="#dadada"/>
<polygon points="664.0,312.0 686.0,304.0 690.0,320.0 670.0,328.0" fill="#c4c4c4"/>
<polygon points="697.0,241.0 706.0,228.0 720.0,211.0 728.0,209.0 716.0,220.0 715.6,244.4" fill="#f1f1f1"/>
<polygon points="700.0,200.0 734.0,200.0 734.0,210.0 749.0,213.0 749.0,223.0 732.0,219.0 720.0,212.0 704.0,206.0" fill="#f1f1f1"/>
<polygon points="734.0,200.0 800.0,200.0 789.0,214.0 770.0,217.0 768.0,228.0 749.0,226.0 749.0,213.0 734.0,210.0" fill="#c11518"/>
<polygon points="770.0,217.0 789.0,214.0 800.0,200.0 848.0,200.0 848.0,212.0 840.0,226.0 814.0,228.0 795.0,233.0 770.0,229.0" fill="#f1f1f1"/>
<ellipse cx="810.0" cy="208.0" rx="8.0" ry="5.6" fill="#8d979f"/>
<ellipse cx="809.6" cy="209.0" rx="5.6" ry="3.6" fill="#3c4650"/>
<polygon points="828.0,230.0 848.0,212.0 848.0,250.0 832.0,250.0" fill="#cfcfcf"/>
<polygon points="848.0,200.0 872.0,200.0 868.0,230.0 867.0,254.0 845.6,254.0 846.0,217.0" fill="#f4de22"/>
<polygon points="870.0,200.0 891.0,200.0 889.0,217.0 880.0,222.4 869.0,220.0" fill="#f1f1f1"/>
<ellipse cx="878.0" cy="211.0" rx="5.6" ry="4.8" fill="#9a9a9a"/>
<ellipse cx="878.0" cy="211.6" rx="3.2" ry="2.8" fill="#4a4a4a"/>
<polygon points="731.0,217.0 749.0,224.0 770.0,228.0 784.0,237.0 793.0,237.0 794.0,248.0 734.0,236.0" fill="#f4de22"/>
<polygon points="744.0,233.0 780.0,239.0 778.0,243.0 740.0,237.0" fill="#d61518"/>
<polygon points="655.0,249.0 680.0,247.0 848.0,288.0 870.0,295.0 872.0,304.0 860.0,312.0 780.0,304.0 746.0,295.6 712.0,288.0 683.0,278.0 681.0,270.0 657.0,264.0" fill="#dd1619"/>
<polygon points="810.0,248.0 848.0,252.0 868.0,264.0 900.0,273.0 902.0,280.0 898.0,294.0 890.0,300.0 872.0,304.0 870.0,295.0 848.0,288.0 810.0,276.0" fill="#dd1619"/>
<ellipse cx="687.0" cy="258.0" rx="3.6" ry="2.4" fill="#c61216" transform="rotate(12 687.0 258.0)"/>
<ellipse cx="705.6" cy="262.2" rx="3.6" ry="2.4" fill="#c61216" transform="rotate(12 705.6 262.2)"/>
<ellipse cx="724.2" cy="266.4" rx="3.6" ry="2.4" fill="#c61216" transform="rotate(12 724.2 266.4)"/>
<ellipse cx="742.8" cy="270.6" rx="3.6" ry="2.4" fill="#c61216" transform="rotate(12 742.8 270.6)"/>
<ellipse cx="761.4" cy="274.8" rx="3.6" ry="2.4" fill="#c61216" transform="rotate(12 761.4 274.8)"/>
<ellipse cx="780.0" cy="279.0" rx="3.6" ry="2.4" fill="#c61216" transform="rotate(12 780.0 279.0)"/>
<ellipse cx="798.6" cy="283.2" rx="3.6" ry="2.4" fill="#c61216" transform="rotate(12 798.6 283.2)"/>
<ellipse cx="817.2" cy="287.4" rx="3.6" ry="2.4" fill="#c61216" transform="rotate(12 817.2 287.4)"/>
<ellipse cx="835.8" cy="291.6" rx="3.6" ry="2.4" fill="#c61216" transform="rotate(12 835.8 291.6)"/>
<polygon points="680.0,247.6 698.0,241.0 716.0,245.0 716.0,252.4 809.0,275.4 812.0,269.0 850.0,280.0 848.0,288.4" fill="#f4de22"/>
<ellipse cx="707.0" cy="247.6" rx="6.4" ry="3.2" fill="#dcc21a" transform="rotate(8 707.0 247.6)"/>
<ellipse cx="820.0" cy="275.6" rx="6.4" ry="3.2" fill="#dcc21a" transform="rotate(8 820.0 275.6)"/>
<polygon points="716.0,243.0 734.0,235.6 792.0,246.4 810.0,258.0" fill="#ececec"/>
<polygon points="716.0,243.0 810.0,258.0 810.0,270.0 809.0,275.4 716.0,253.0" fill="#fafafa"/>
<ellipse cx="740.0" cy="242.6" rx="4.8" ry="2.4" fill="#d6d6d6" transform="rotate(10 740.0 242.6)"/>
<ellipse cx="753.6" cy="245.2" rx="4.8" ry="2.4" fill="#d6d6d6" transform="rotate(10 753.6 245.2)"/>
<ellipse cx="767.2" cy="247.8" rx="4.8" ry="2.4" fill="#d6d6d6" transform="rotate(10 767.2 247.8)"/>
<ellipse cx="780.8" cy="250.4" rx="4.8" ry="2.4" fill="#d6d6d6" transform="rotate(10 780.8 250.4)"/>
<polygon points="715.0,219.0 720.0,216.0 731.0,217.0 743.0,225.0 734.0,237.0 716.0,243.0" fill="#f4de22"/>
<ellipse cx="724.0" cy="219.6" rx="6.4" ry="3.8" fill="#2a6fc4"/>
<polygon points="793.0,237.0 800.0,233.0 810.0,234.0 823.0,230.0 810.0,258.0 793.0,257.0" fill="#f4de22"/>
<ellipse cx="801.6" cy="237.0" rx="6.4" ry="3.8" fill="#2a6fc4"/>
<polygon points="661.0,237.0 670.0,224.0 680.0,223.0 690.0,226.0 698.0,232.0 697.0,247.0 680.0,248.0 662.0,247.0" fill="#e31e1e"/>
<ellipse cx="689.0" cy="230.0" rx="8.4" ry="4.4" fill="#ee3a3a"/>
<ellipse cx="689.0" cy="230.0" rx="5.2" ry="2.4" fill="#ca1616"/>
<ellipse cx="674.0" cy="227.0" rx="6.0" ry="4.0" fill="#ee3a3a"/>
<ellipse cx="662.0" cy="252.4" rx="6.4" ry="4.0" fill="#2a6fc4"/>
<polygon points="747.0,257.0 763.0,257.0 761.6,275.0 749.0,275.0" fill="#d61a1a"/>
<ellipse cx="755.0" cy="256.6" rx="9.2" ry="4.4" fill="#e83030"/>
<ellipse cx="755.0" cy="256.6" rx="5.6" ry="2.4" fill="#ca1616"/>
<polygon points="832.0,265.0 848.0,265.0 847.0,282.0 833.0,282.0" fill="#d61a1a"/>
<ellipse cx="840.0" cy="264.4" rx="9.2" ry="4.4" fill="#e83030"/>
<ellipse cx="840.0" cy="264.4" rx="5.6" ry="2.4" fill="#ca1616"/>
<polygon points="848.0,288.4 849.0,260.0 862.0,232.0 880.0,235.0 882.0,244.0 872.0,264.0 868.0,267.0" fill="#f6f6f6"/>
<polygon points="848.0,288.4 849.0,260.0 862.0,232.0 865.0,233.0 853.0,262.0 852.4,289.0" fill="#dedede"/>
<polygon points="878.0,276.0 883.0,271.0 900.0,274.0 903.0,280.0 898.0,296.0 890.0,301.0 876.0,298.0" fill="#e31e1e"/>
<ellipse cx="899.0" cy="279.0" rx="3.2" ry="6.0" fill="#ee3a3a" transform="rotate(15 899.0 279.0)"/>
<ellipse cx="895.0" cy="291.0" rx="3.2" ry="6.0" fill="#ee3a3a" transform="rotate(15 895.0 291.0)"/>
<ellipse cx="853.0" cy="296.6" rx="7.2" ry="4.4" fill="#2a6fc4"/>
<polygon points="640.0,296.0 666.0,266.0 679.0,264.0 683.0,269.0 680.0,284.0 652.0,320.0 640.0,324.0" fill="#f4f4f4"/>
<ellipse cx="655.0" cy="290.0" rx="7.2" ry="4.8" fill="#1f2a30" transform="rotate(-20 655.0 290.0)"/>
<polyline points="667.0,269.0 677.0,265.0" fill="none" stroke="#2a6fc4" stroke-width="2.8"/>
<polyline points="670.0,263.6 674.0,270.4" fill="none" stroke="#2a6fc4" stroke-width="2.8"/>
<polygon points="745.0,295.0 768.0,299.0 764.0,310.0 754.0,312.0 747.0,308.0" fill="#f4de22"/>
<polygon points="784.0,318.0 872.0,304.0 890.0,338.0 890.0,347.0 786.0,347.0" fill="#e31c1c"/>
<polygon points="783.0,318.0 789.0,316.0 789.0,328.0 784.0,330.0" fill="#c11414"/>
<polygon points="851.1,438.4 845.0,444.5 827.9,449.4 818.1,468.9 808.3,493.4 798.5,503.2 791.2,517.9 787.5,528.9 780.2,533.8 766.7,527.7 764.3,517.9 772.8,472.6 788.7,465.3 827.9,446.9" fill="#d61818"/>
<polygon points="616.0,370.0 736.0,370.0 748.0,412.0 786.0,414.0 788.0,436.0 772.0,439.0 760.0,466.0 690.0,418.0 652.0,406.0 620.0,399.0" fill="#d21619"/>
<polygon points="708.0,390.0 748.0,412.0 786.0,414.0 788.0,436.0 772.0,439.0 710.0,422.4" fill="#d6181b"/>
<polygon points="614.1,368.4 650.4,351.3 733.6,342.8 733.6,400.4 652.5,400.4 618.4,394.0" fill="#d21619"/>
<polygon points="594.0,370.0 615.0,370.0 620.0,400.0 603.0,409.0" fill="#36424c"/>
<polygon points="790.0,407.0 820.0,402.0 812.0,418.0 790.0,430.0" fill="#dcdcdc"/>
<polygon points="816.0,402.0 860.0,389.0 860.0,405.0 818.0,420.0" fill="#ce1518"/>
<polygon points="741.0,436.0 710.0,422.4 772.0,438.0 860.0,402.0 860.0,430.0 780.0,470.0 760.0,469.0 740.0,460.0" fill="#36424c"/>
<polygon points="741.0,437.0 772.0,439.0 860.0,403.0 860.0,411.0 775.0,448.4 741.0,444.4" fill="#414f5a"/>
<polygon points="618.0,285.0 648.0,255.0 660.0,265.0 640.0,303.0 628.0,293.0" fill="#313c46"/>
<polygon points="640.0,305.0 665.0,265.0 672.0,261.0 680.0,264.0 682.4,274.0 680.0,285.0 660.0,313.0 648.0,325.0 643.0,323.0" fill="#f4f4f4"/>
<ellipse cx="654.0" cy="290.0" rx="8.0" ry="4.8" fill="#1f2a30" transform="rotate(-15 654.0 290.0)"/>
<polyline points="667.0,268.0 678.0,266.0" fill="none" stroke="#2a6fc4" stroke-width="2.8"/>
<polyline points="670.4,263.0 674.4,272.0" fill="none" stroke="#2a6fc4" stroke-width="2.8"/>
<polygon points="643.0,323.0 660.0,313.0 680.0,285.0 712.0,287.0 708.0,301.0 688.0,323.0 644.0,336.0" fill="#e2e2e2"/>
<polygon points="660.0,319.0 680.0,313.0 686.0,321.0 664.0,329.0" fill="#cacaca"/>
<polygon points="680.0,302.0 687.0,297.0 689.0,313.0 682.0,314.0" fill="#d21818"/>
<polygon points="644.0,337.0 688.0,323.0 696.0,337.0 694.0,349.0 660.0,363.0 646.0,361.0" fill="#d61818"/>
<ellipse cx="690.0" cy="343.0" rx="6.4" ry="6.0" fill="#e6e2dc"/>
<ellipse cx="690.0" cy="342.6" rx="4.0" ry="3.6" fill="#f6f6f6"/>
<ellipse cx="652.0" cy="358.0" rx="6.0" ry="5.6" fill="#e6e2dc"/>
<ellipse cx="652.0" cy="357.6" rx="3.6" ry="3.2" fill="#f6f6f6"/>
<polygon points="694.0,330.0 717.8,294.4 730.0,296.2 729.4,303.4 699.4,336.6" fill="#c7b9c0"/>
<polyline points="696.0,325.4 696.0,340.4" fill="none" stroke="#f7f7f7" stroke-width="1.8"/>
<polyline points="699.5,320.2 699.5,336.5" fill="none" stroke="#f7f7f7" stroke-width="1.8"/>
<polyline points="703.0,314.9 703.0,332.6" fill="none" stroke="#f7f7f7" stroke-width="1.8"/>
<polyline points="706.5,309.7 706.5,328.6" fill="none" stroke="#f7f7f7" stroke-width="1.8"/>
<polyline points="710.0,304.5 710.0,324.7" fill="none" stroke="#f7f7f7" stroke-width="1.8"/>
<polyline points="713.5,299.2 713.5,320.8" fill="none" stroke="#f7f7f7" stroke-width="1.8"/>
<polyline points="717.0,294.0 717.0,316.9" fill="none" stroke="#f7f7f7" stroke-width="1.8"/>
<polyline points="720.5,293.2 720.5,313.0" fill="none" stroke="#f7f7f7" stroke-width="1.8"/>
<polyline points="724.0,293.7 724.0,309.0" fill="none" stroke="#f7f7f7" stroke-width="1.8"/>
<polyline points="727.5,294.3 727.5,305.1" fill="none" stroke="#f7f7f7" stroke-width="1.8"/>
<polygon points="543.0,252.6 581.0,240.0 618.0,273.0 641.0,308.6 602.4,321.4" fill="#ce1a1e"/>
<polygon points="543.0,252.6 602.4,321.4 608.0,372.0 600.0,372.0 592.8,361.2 570.0,319.4 545.4,278.0" fill="#d61c1e"/>
<polygon points="602.4,321.4 641.0,308.6 645.0,357.0 628.0,372.0 608.0,372.0" fill="#ce181a"/>
<polyline points="602.8,321.4 640.6,308.8" fill="none" stroke="#ec4848" stroke-width="1.4"/>
<polyline points="543.4,253.0 602.4,321.4" fill="none" stroke="#e03434" stroke-width="1.0"/>
<polygon points="590.0,252.0 600.0,249.0 618.0,273.0 618.0,283.0 608.0,285.0" fill="#c11518"/>
<polygon points="600.0,258.0 604.0,256.0 613.0,269.0 610.0,272.0" fill="#f0f0f0"/>
<ellipse cx="553.0" cy="295.4" rx="11.6" ry="22.4" fill="#dcdce0" transform="rotate(-22 553.0 295.4)"/>
<ellipse cx="555.0" cy="294.6" rx="11.6" ry="22.4" fill="#f6f6f6" transform="rotate(-22 555.0 294.6)"/>
<ellipse cx="557.2" cy="293.4" rx="6.8" ry="17.6" fill="#e2e2e6" transform="rotate(-22 557.2 293.4)"/>
<ellipse cx="558.0" cy="293.0" rx="5.2" ry="15.6" fill="#f3f3f5" transform="rotate(-22 558.0 293.0)"/>
<ellipse cx="582.4" cy="335.4" rx="12.4" ry="23.6" fill="#dcdce0" transform="rotate(-22 582.4 335.4)"/>
<ellipse cx="584.4" cy="334.6" rx="12.4" ry="23.6" fill="#f6f6f6" transform="rotate(-22 584.4 334.6)"/>
<ellipse cx="586.8" cy="333.4" rx="7.2" ry="18.4" fill="#e2e2e6" transform="rotate(-22 586.8 333.4)"/>
<ellipse cx="587.6" cy="333.0" rx="5.6" ry="16.4" fill="#f3f3f5" transform="rotate(-22 587.6 333.0)"/>
<polygon points="700.0,330.0 734.0,338.0 750.0,410.0 789.0,408.0 788.0,437.0 700.0,437.0" fill="#d01619"/>
<ellipse cx="706.0" cy="361.0" rx="6.6" ry="5.0" fill="#f6f6f6"/>
<ellipse cx="729.0" cy="368.4" rx="5.2" ry="5.6" fill="#e4e8f0"/>
<ellipse cx="723.0" cy="381.0" rx="7.2" ry="5.2" fill="#f6f6f6"/>
<polygon points="789.0,408.0 820.0,402.0 812.0,418.0 790.0,430.0" fill="#d8d8d8"/>
<polygon points="820.0,402.0 860.0,394.0 840.0,410.0 812.0,418.0" fill="#ca1515"/>
<polygon points="788.0,437.0 790.0,430.0 860.0,402.0 870.0,402.0 874.0,410.0 870.0,420.0 840.0,437.0" fill="#36424c"/>
<polygon points="734.0,338.0 784.0,311.0 874.0,306.0 889.0,336.0 747.0,359.0" fill="#cf171b"/>
<polygon points="784.0,311.0 788.0,307.0 876.0,302.0 874.0,316.0 788.0,320.0" fill="#cc161a"/>
<polygon points="734.0,338.0 747.0,359.0 750.0,411.0 736.0,384.0" fill="#c11418"/>
<ellipse cx="731.4" cy="352.0" rx="1.8" ry="5.6" fill="#8a8f96"/>
<polygon points="747.0,359.0 889.0,336.0 884.0,386.0 860.0,394.4 749.0,412.4" fill="#d91519"/>
<polyline points="747.4,359.4 888.6,336.4" fill="none" stroke="#f06a6a" stroke-width="1.4"/>
<ellipse cx="781.0" cy="385.0" rx="24.4" ry="20.0" fill="#f4f4f8" transform="rotate(-14 781.0 385.0)"/>
<ellipse cx="781.8" cy="385.4" rx="18.4" ry="14.4" fill="#dfe6ee" transform="rotate(-14 781.8 385.4)"/>
<ellipse cx="783.8" cy="388.6" rx="14.0" ry="10.0" fill="#f2f5f9" transform="rotate(-14 783.8 388.6)"/>
<polygon points="766.0,384.6 768.6,377.8 778.6,371.8 792.0,372.6 787.4,379.4 776.0,384.6" fill="#2e3a44"/>
<ellipse cx="856.8" cy="371.4" rx="24.4" ry="20.0" fill="#f4f4f8" transform="rotate(-14 856.8 371.4)"/>
<ellipse cx="857.6" cy="371.8" rx="18.4" ry="14.4" fill="#dfe6ee" transform="rotate(-14 857.6 371.8)"/>
<ellipse cx="859.6" cy="375.0" rx="14.0" ry="10.0" fill="#f2f5f9" transform="rotate(-14 859.6 375.0)"/>
<polygon points="841.8,371.0 844.4,364.2 854.4,358.2 867.8,359.0 863.2,365.8 851.8,371.0" fill="#2e3a44"/>
<polygon points="789.0,309.0 792.0,304.0 795.0,308.0 798.0,305.0 800.0,313.0 790.0,315.0" fill="#f1f1f1"/>
<polygon points="812.0,313.0 815.0,304.0 821.0,298.0 829.0,297.0 836.0,301.0 838.0,313.0 831.0,313.0 829.0,307.0 824.0,305.0 820.0,307.0 817.0,314.0" fill="#f1f1f1"/>
<polyline points="821.0,302.4 832.0,303.6" fill="none" stroke="#2a6fc4" stroke-width="2.2"/>
<polyline points="825.0,299.6 829.0,306.4" fill="none" stroke="#2a6fc4" stroke-width="2.2"/>
<polygon points="708.0,421.7 772.0,437.7 772.0,442.0 708.0,424.9" fill="#566470"/>
<polygon points="634.4,369.5 654.7,365.2 657.9,372.7 652.5,383.3 641.9,381.2" fill="#36424c"/>
<polygon points="736.8,461.5 762.9,471.3 767.8,477.8 762.9,489.2 748.2,501.3 728.7,494.1" fill="#d61719"/>
<polygon points="738.0,474.0 760.0,466.0 768.0,474.0 750.0,498.0 736.0,490.0" fill="#d21818"/>
<ellipse cx="743.0" cy="487.0" rx="4.4" ry="4.0" fill="#eee"/>
<polygon points="566.0,460.0 586.0,436.0 595.0,430.0 600.0,454.0 598.0,464.0 584.0,472.0 568.0,468.0" fill="#d61a1c"/>
<polygon points="593.0,428.0 614.0,399.0 652.0,406.0 654.0,416.4 688.0,423.2 690.0,418.0 741.0,435.6 725.0,465.2" fill="#d3171b"/>
<polygon points="725.0,465.2 741.0,435.6 738.0,474.0 723.0,510.0" fill="#d0181b"/>
<polygon points="593.0,428.0 725.0,465.2 723.0,510.0 672.0,494.0 600.0,472.4 592.0,454.0" fill="#d71519"/>
<polyline points="593.4,428.4 724.6,465.4" fill="none" stroke="#ee6060" stroke-width="1.2"/>
<polygon points="652.0,406.0 690.0,418.0 688.0,423.2 654.0,416.4" fill="#c81515"/>
<polyline points="663.0,405.2 663.0,408.4" fill="none" stroke="#f4f4f4" stroke-width="1.2"/>
<polyline points="668.4,406.8 668.4,410.0" fill="none" stroke="#f4f4f4" stroke-width="1.2"/>
<polyline points="673.8,408.4 673.8,411.6" fill="none" stroke="#f4f4f4" stroke-width="1.2"/>
<polyline points="679.2,410.0 679.2,413.2" fill="none" stroke="#f4f4f4" stroke-width="1.2"/>
<polyline points="684.6,411.6 684.6,414.8" fill="none" stroke="#f4f4f4" stroke-width="1.2"/>
<ellipse cx="622.0" cy="462.0" rx="23.2" ry="17.6" fill="#f3f3f7" transform="rotate(17 622.0 462.0)"/>
<ellipse cx="623.0" cy="463.6" rx="17.6" ry="12.4" fill="#cfd7e0" transform="rotate(17 623.0 463.6)"/>
<ellipse cx="623.4" cy="464.2" rx="16.0" ry="10.8" fill="#eef2f6" transform="rotate(17 623.4 464.2)"/>
<polyline points="618.0,454.4 630.0,459.0 624.0,455.6" fill="none" stroke="#2b3741" stroke-width="1.6"/>
<ellipse cx="691.0" cy="483.4" rx="23.2" ry="17.6" fill="#f3f3f7" transform="rotate(17 691.0 483.4)"/>
<ellipse cx="692.0" cy="485.0" rx="17.6" ry="12.4" fill="#cfd7e0" transform="rotate(17 692.0 485.0)"/>
<ellipse cx="692.4" cy="485.6" rx="16.0" ry="10.8" fill="#eef2f6" transform="rotate(17 692.4 485.6)"/>
<polyline points="687.0,475.8 699.0,480.4 693.0,477.0" fill="none" stroke="#2b3741" stroke-width="1.6"/>
<polygon points="765.0,528.0 788.0,470.0 820.0,470.0 820.0,478.0 794.0,528.0 784.0,534.0 766.0,529.0" fill="#e31c1c"/>
<polygon points="603.0,510.0 618.0,478.0 644.0,483.6 660.0,487.6 672.0,491.6 730.0,498.0 722.0,510.0 696.0,558.0 692.0,566.0 664.0,554.0 663.0,536.0 652.0,536.0 644.0,547.0 604.0,536.0" fill="#d9181b"/>
<polygon points="624.0,524.0 648.0,528.0 652.0,536.0 644.0,547.0 624.0,542.0" fill="#c61518"/>
<polygon points="668.0,536.0 686.0,539.0 686.0,550.0 668.0,548.0" fill="#c61518"/>
<polygon points="653.0,506.0 660.0,492.0 678.0,498.0 668.0,518.0 664.0,536.0 668.0,556.0 658.0,552.0 653.0,530.0" fill="#f6f6f6"/>
<ellipse cx="646.4" cy="519.0" rx="2.6" ry="4.8" fill="#2a6fc4"/>
<polygon points="555.0,530.0 560.0,518.0 594.0,470.0 600.0,470.0 604.0,474.0 574.0,516.0 571.0,536.0" fill="#f4de22"/>
<polygon points="571.0,536.0 574.0,516.0 604.0,474.0 618.0,482.0 603.0,510.0 602.0,538.0 596.0,546.0" fill="#f6f6f6"/>
<polygon points="592.0,520.0 602.0,512.0 602.0,538.0 596.0,545.0 590.0,540.0" fill="#d8d8d8"/>
<ellipse cx="599.6" cy="536.0" rx="2.4" ry="4.0" fill="#d61818"/>
<polygon points="537.0,520.0 540.0,511.0 547.0,510.0 559.0,517.0 556.0,530.0 540.0,527.0" fill="#e31c1c"/>
<polygon points="696.0,558.0 722.0,510.0 732.0,498.0 750.0,504.0 748.0,516.0 718.0,588.0 708.0,584.0 696.0,576.0" fill="#f6f6f6"/>
<polygon points="720.0,562.0 740.0,520.0 748.0,516.0 721.0,582.0" fill="#d8d8d8"/>
<polygon points="718.0,588.0 748.0,516.0 768.0,470.0 788.0,470.0 765.0,528.0 770.0,532.0 748.0,574.0 742.0,592.0 736.0,592.0" fill="#f4de22"/>
<ellipse cx="729.0" cy="544.4" rx="2.2" ry="4.8" fill="#2a6fc4" transform="rotate(15 729.0 544.4)"/>
<polygon points="740.0,582.0 746.0,576.0 766.0,583.0 766.0,594.0 759.0,600.0 741.0,590.0" fill="#e31c1c"/>
<ellipse cx="762.4" cy="590.0" rx="3.6" ry="8.4" fill="#e83838" transform="rotate(-15 762.4 590.0)"/>
<ellipse cx="691.0" cy="483.4" rx="23.2" ry="17.6" fill="#f3f3f7" transform="rotate(17 691.0 483.4)"/>
<ellipse cx="692.0" cy="485.0" rx="17.6" ry="12.4" fill="#cfd7e0" transform="rotate(17 692.0 485.0)"/>
<ellipse cx="692.4" cy="485.6" rx="16.0" ry="10.8" fill="#eef2f6" transform="rotate(17 692.4 485.6)"/>
<polyline points="687.0,475.8 699.0,480.4 693.0,477.0" fill="none" stroke="#2b3741" stroke-width="1.6"/>
<ellipse cx="622.0" cy="462.0" rx="23.2" ry="17.6" fill="#f3f3f7" transform="rotate(17 622.0 462.0)"/>
<ellipse cx="623.0" cy="463.6" rx="17.6" ry="12.4" fill="#cfd7e0" transform="rotate(17 623.0 463.6)"/>
<ellipse cx="623.4" cy="464.2" rx="16.0" ry="10.8" fill="#eef2f6" transform="rotate(17 623.4 464.2)"/>
<polyline points="618.0,454.4 630.0,459.0 624.0,455.6" fill="none" stroke="#2b3741" stroke-width="1.6"/>
</g>
</svg>
<div id="nav">
<svg style="position:absolute;left:25.500px;top:8.200px" width="17.500" height="17.500" viewBox="0 0 24 24"><path d="M10 20v-6h4v6h5v-8h3L12 3 2 12h3v8z" fill="#1f2027"/></svg>
<div class="tab act">Assembly</div>
<div class="tab" style="left:176px">Electrics</div>
<div class="tab" style="left:287px">Programming</div>
<div class="tab" style="left:439px">Testing</div>
</div>
<div id="bar">
<div class="tb" style="left:14px"><svg width="36" height="36" viewBox="-7.900 -9.400 38.700 38.700"><path d="M12.5 8c-2.65 0-5.05.99-6.9 2.6L2 7v9h9l-3.620-3.620c1.390-1.160 3.160-1.880 5.120-1.880 3.540 0 6.550 2.310 7.600 5.500l2.370-.780C21.080 11.030 17.150 8 12.500 8z" fill="#6e6e6e"/></svg></div>
<div class="tb" style="left:60px"><svg width="36" height="36" viewBox="-7.900 -9.400 38.700 38.700"><path d="M18.400 10.600C16.550 8.990 14.150 8 11.500 8c-4.650 0-8.580 3.030-9.960 7.220L3.900 16c1.050-3.190 4.050-5.500 7.600-5.500 1.950 0 3.730.720 5.120 1.880L13 16h9V7l-3.600 3.600z" fill="#6e6e6e"/></svg></div>
<svg style="position:absolute;left:113px;top:18px" width="21" height="21" viewBox="0 0 24 24"><path d="M17 3H5c-1.110 0-2 .9-2 2v14c0 1.100.890 2 2 2h14c1.100 0 2-.9 2-2V7l-4-4zm-5 16c-1.660 0-3-1.340-3-3s1.340-3 3-3 3 1.340 3 3-1.340 3-3 3zm3-10H5V5h10v4z" fill="#fff"/></svg>
<svg style="position:absolute;left:1440px;top:18px" width="20" height="20" viewBox="0 0 24 24"><path d="M19 9h-4V3H9v6H5l7 7 7-7zM5 18v2h14v-2H5z" fill="#fff"/></svg>
<svg style="position:absolute;left:1477px;top:15px" width="20" height="20" viewBox="0 0 24 24"><path d="M9 16.170L4.830 12l-1.420 1.410L9 19 21 7l-1.410-1.410z" fill="#fff"/></svg>
</div>
<div id="left">
<div id="search">Search</div>
<svg style="position:absolute;left:170.500px;top:14.500px" width="18.500" height="18.500" viewBox="0 0 24 24"><path d="M15.500 14h-.790l-.280-.270C15.410 12.590 16 11.110 16 9.500 16 5.910 13.090 3 9.500 3S3 5.910 3 9.500 5.910 16 9.500 16c1.610 0 3.090-.590 4.230-1.570l.270.280v.790l5 4.990L20.490 19l-4.990-5zm-6 0C7.010 14 5 11.990 5 9.500S7.010 5 9.500 5 14 7.010 14 9.500 11.990 14 9.500 14z" fill="#8a8a8a"/></svg>
<div class="cat" style="top:52.0px">Beam</div>
<div class="cat" style="top:71.7px">Pin</div>
<div class="cat" style="top:91.3px">Axis</div>
<div class="cat" style="top:110.9px">Wheel</div>
<div class="cat" style="top:130.6px">Tyre</div>
<div class="cat" style="top:150.2px">Gear</div>
<div class="sbt" style="left:190px;top:46px;width:11.5px;height:118px"></div>
<div class="sbh" style="left:191.3px;top:60px;width:9.2px;height:73px"></div>
<svg style="position:absolute;left:192px;top:51px" width="8" height="5" viewBox="0 0 8 5"><path d="M0 4.500L4 .5l4 4z" fill="#a3a3a3"/></svg>
<svg style="position:absolute;left:192px;top:155px" width="8" height="5" viewBox="0 0 8 5"><path d="M0 .5L4 4.500l4-4z" fill="#404040"/></svg>
<div class="cat" style="top:175px;font-weight:bold;color:#222;letter-spacing:-0.2px">Beam</div>
<div class="sbt" style="left:190px;top:166px;width:11.5px;height:490px"></div>
<div class="sbh" style="left:191.3px;top:178px;width:9.2px;height:118px"></div>
<svg style="position:absolute;left:192px;top:169px" width="8" height="5" viewBox="0 0 8 5"><path d="M0 4.500L4 .5l4 4z" fill="#a3a3a3"/></svg>
<div class="card" style="left:5.7px;top:200.3px"><i></i><svg width="66" height="64" viewBox="0 0 66 64"><polygon points="13.7,37.7 18,32 48,20.5 54.5,22 55,27.7 50.8,33.4 20.8,44.8 15.1,43.400" fill="#aeaeae"/><polygon points="13.7,37.7 18,32 48,20.5 54.5,22 52,26 20,38.500 15,40" fill="#c6c6c6"/></svg><b>0</b><span>Beam 5</span></div>
<div class="card" style="left:95.6px;top:200.3px"><i></i><svg width="66" height="64" viewBox="0 0 66 64"><polygon points="12.3,37.7 52.2,20 54.2,22 53.6,27.7 15.1,44.2 12.3,42" fill="#cc2222"/><polygon points="12.3,37.7 52.2,20 54.2,22 14,40" fill="#e04848"/></svg><b>0</b><span>Beam 7</span></div>
<div class="card" style="left:5.7px;top:304.5px"><i></i><svg width="66" height="64" viewBox="0 0 66 64"><polygon points="12.3,37.7 53.6,19.7 55.6,22 55,26.2 13.7,44.2 11.7,42" fill="#e2b81c"/><polygon points="12.3,37.7 53.6,19.7 55.6,22 14,40" fill="#f2d040"/></svg><b>0</b><span>Beam 9</span></div>
<div class="card" style="left:95.6px;top:304.5px"><i></i><svg width="66" height="64" viewBox="0 0 66 64"><polygon points="16.5,33.4 22.3,26.2 43.7,18.5 50.8,20.500 51.4,27.7 45,36.2 25,45.4 18,43.400" fill="#a8a8a8"/><polygon points="16.5,33.4 22.3,26.2 43.7,18.5 50.8,20.500 49,25 25,35 19,37" fill="#c2c2c2"/></svg><b>0</b><span>Beam 3</span></div>
<div class="card" style="left:5.7px;top:408.6px"><i></i><svg width="66" height="64" viewBox="0 0 66 64"><polygon points="16.3,30.3 21.6,26.8 44.2,19.1 51.1,21.6 51.1,30.3 45.9,37.2 25,45.9 17.4,43.500" fill="#b81212"/><polygon points="16.3,30.3 21.6,26.8 44.2,19.1 51.1,21.6 48,26 24,35 18,34" fill="#d42020"/></svg><b>0</b><span>Beam 3</span></div>
<div class="card" style="left:95.6px;top:408.6px"><i></i><svg width="66" height="64" viewBox="0 0 66 64"><polygon points="11.5,37.9 53.2,19.8 55,22.600 13.2,43.500" fill="#d63838"/></svg><b>0</b><span>Beam 11</span></div>
<div class="card" style="left:5.7px;top:512.8px"><i></i><svg width="66" height="64" viewBox="0 0 66 64"><polygon points="9.4,37.2 56.3,19.1 58.8,21.600 58.1,25 11.8,45.9 9.4,44.200" fill="#a82020"/></svg><b>0</b><span>Beam 15</span></div>
<div class="card" style="left:95.6px;top:512.8px"><i></i><svg width="66" height="64" viewBox="0 0 66 64"><polygon points="13.2,40.7 18.4,35.5 41,26.8 44.5,13.600 49.7,12.9 55,18.100 53.2,32 49.7,37.2 21.9,50.4 15,47.700" fill="#c01414"/><polygon points="13.2,40.7 18.4,35.5 41,26.8 44.5,13.600 49.7,12.9 47,30 20,42" fill="#d42424"/></svg><b>0</b><span>L-Beam 3x5</span></div>
<div class="card" style="left:5.7px;top:616.9px"><i></i><svg width="66" height="64" viewBox="0 0 66 64"><polygon points="39,16.3 47.7,12.9 54.6,18.1 54.6,40 39,40" fill="#d4d4d4"/></svg><b>0</b><span></span></div>
<div class="card" style="left:95.6px;top:616.9px"><i></i><svg width="66" height="64" viewBox="0 0 66 64"><polygon points="26,12.9 35,10 42.8,14 42.8,40 26,40" fill="#5a5a5a"/></svg><b>0</b><span></span></div>
</div>
<div id="right">
<div style="position:absolute;left:13px;top:18px;font-weight:bold;font-size:12px;letter-spacing:-0.3px;color:#222;line-height:15px;white-space:nowrap">Details used</div>
<div style="position:absolute;left:154px;top:17px;width:60px;height:15px;border-radius:7.5px;background:#d5e5f5;font-weight:bold;font-size:10.800px;line-height:15px;color:#1c2a44;padding-left:4.500px;white-space:nowrap">158/158</div>
<div class="it" style="top:40.3px">Beam 5</div>
<div class="it" style="top:71.8px">Pin 1/2</div>
<div class="it" style="top:103.4px">Pin 1/2</div>
<div class="it" style="top:134.9px">T-beam x3</div>
<div class="it" style="top:166.4px">Engine</div>
<div class="it" style="top:197.9px">Beam 15</div>
<div class="it" style="top:229.5px">Pin 1/2</div>
<div class="it" style="top:261.0px">Pin 1/2</div>
<div class="it" style="top:292.5px">T-beam 3x3</div>
<div class="it" style="top:324.1px">Engine</div>
<div class="it" style="top:355.6px">Pin 1/1</div>
<div class="it" style="top:387.1px">Pin 1/1</div>
<div class="it" style="top:418.7px">Pin 1/1</div>
<div class="it" style="top:450.2px">Pin 1/1</div>
<div class="it" style="top:481.7px">Pin 1/1</div>
<div class="it" style="top:513.2px">Pin 1/1</div>
<div class="it" style="top:544.8px">Pin 1/1</div>
<div class="it" style="top:576.3px">Pin 1/1</div>
<div class="it" style="top:607.8px">Pin 1/1</div>
<div class="it" style="top:639.4px">Beam 9</div>
<div class="sbt" style="left:188px;top:40px;width:13px;height:610px"></div>
<div class="sbh" style="left:189.500px;top:54px;width:10px;height:71.500px"></div>
<svg style="position:absolute;left:190.500px;top:45px" width="8" height="5" viewBox="0 0 8 5"><path d="M0 4.500L4 .5l4 4z" fill="#a3a3a3"/></svg>
<svg style="position:absolute;left:190.500px;top:644px" width="8" height="5" viewBox="0 0 8 5"><path d="M0 .5L4 4.500l4-4z" fill="#404040"/></svg>
</div>
<div id="vt">
<div class="vb on" style="left:3.5px"><svg style="position:absolute;left:-1px;top:-1px" width="33" height="24.500" viewBox="0 0 33 24.500"><rect x="7.800" y="5.300" width="14" height="12.800" rx="1" fill="none" stroke="#1e1e1e" stroke-width="2.200"/><path d="M22 10.700l4.600-3.500v9l-4.600-3.500z" fill="#1e1e1e"/></svg></div>
<div class="vb" style="left:42.9px"><svg style="position:absolute;left:-1px;top:-1px" width="33" height="24.500" viewBox="0 0 33 24.500"><rect x="9.500" y="5" width="14" height="13.500" fill="none" stroke="#757575" stroke-width="1.700"/></svg></div>
<div class="vb" style="left:82.3px"><svg style="position:absolute;left:-1px;top:-1px" width="33" height="24.500" viewBox="0 0 33 24.500"><rect x="9.500" y="5" width="14" height="13.500" fill="none" stroke="#757575" stroke-width="1.700" stroke-dasharray="3.200 2.200"/></svg></div>
<div class="vb" style="left:121.7px"><svg style="position:absolute;left:-1px;top:-1px" width="33" height="24.500" viewBox="0 0 33 24.500"><path d="M9 11.700h14M17.500 5.700l6 6-6 6" fill="none" stroke="#757575" stroke-width="1.700"/></svg></div>
<div class="vb" style="left:161.1px"><svg style="position:absolute;left:-1px;top:-1px" width="33" height="24.500" viewBox="0 0 33 24.500"><path d="M24 11.700H10M15.500 5.700l-6 6 6 6" fill="none" stroke="#757575" stroke-width="1.700"/></svg></div>
<div class="vb" style="left:200.5px"><svg style="position:absolute;left:-1px;top:-1px" width="33" height="24.500" viewBox="0 0 33 24.500"><path d="M16.500 19V5M10.500 11l6-6 6 6" fill="none" stroke="#757575" stroke-width="1.700"/></svg></div>
<div class="vb" style="left:239.9px"><svg style="position:absolute;left:-1px;top:-1px" width="33" height="24.500" viewBox="0 0 33 24.500"><path d="M16.500 4.500v14M10.500 12.500l6 6 6-6" fill="none" stroke="#757575" stroke-width="1.700"/></svg></div>
</div>
</body></html>
